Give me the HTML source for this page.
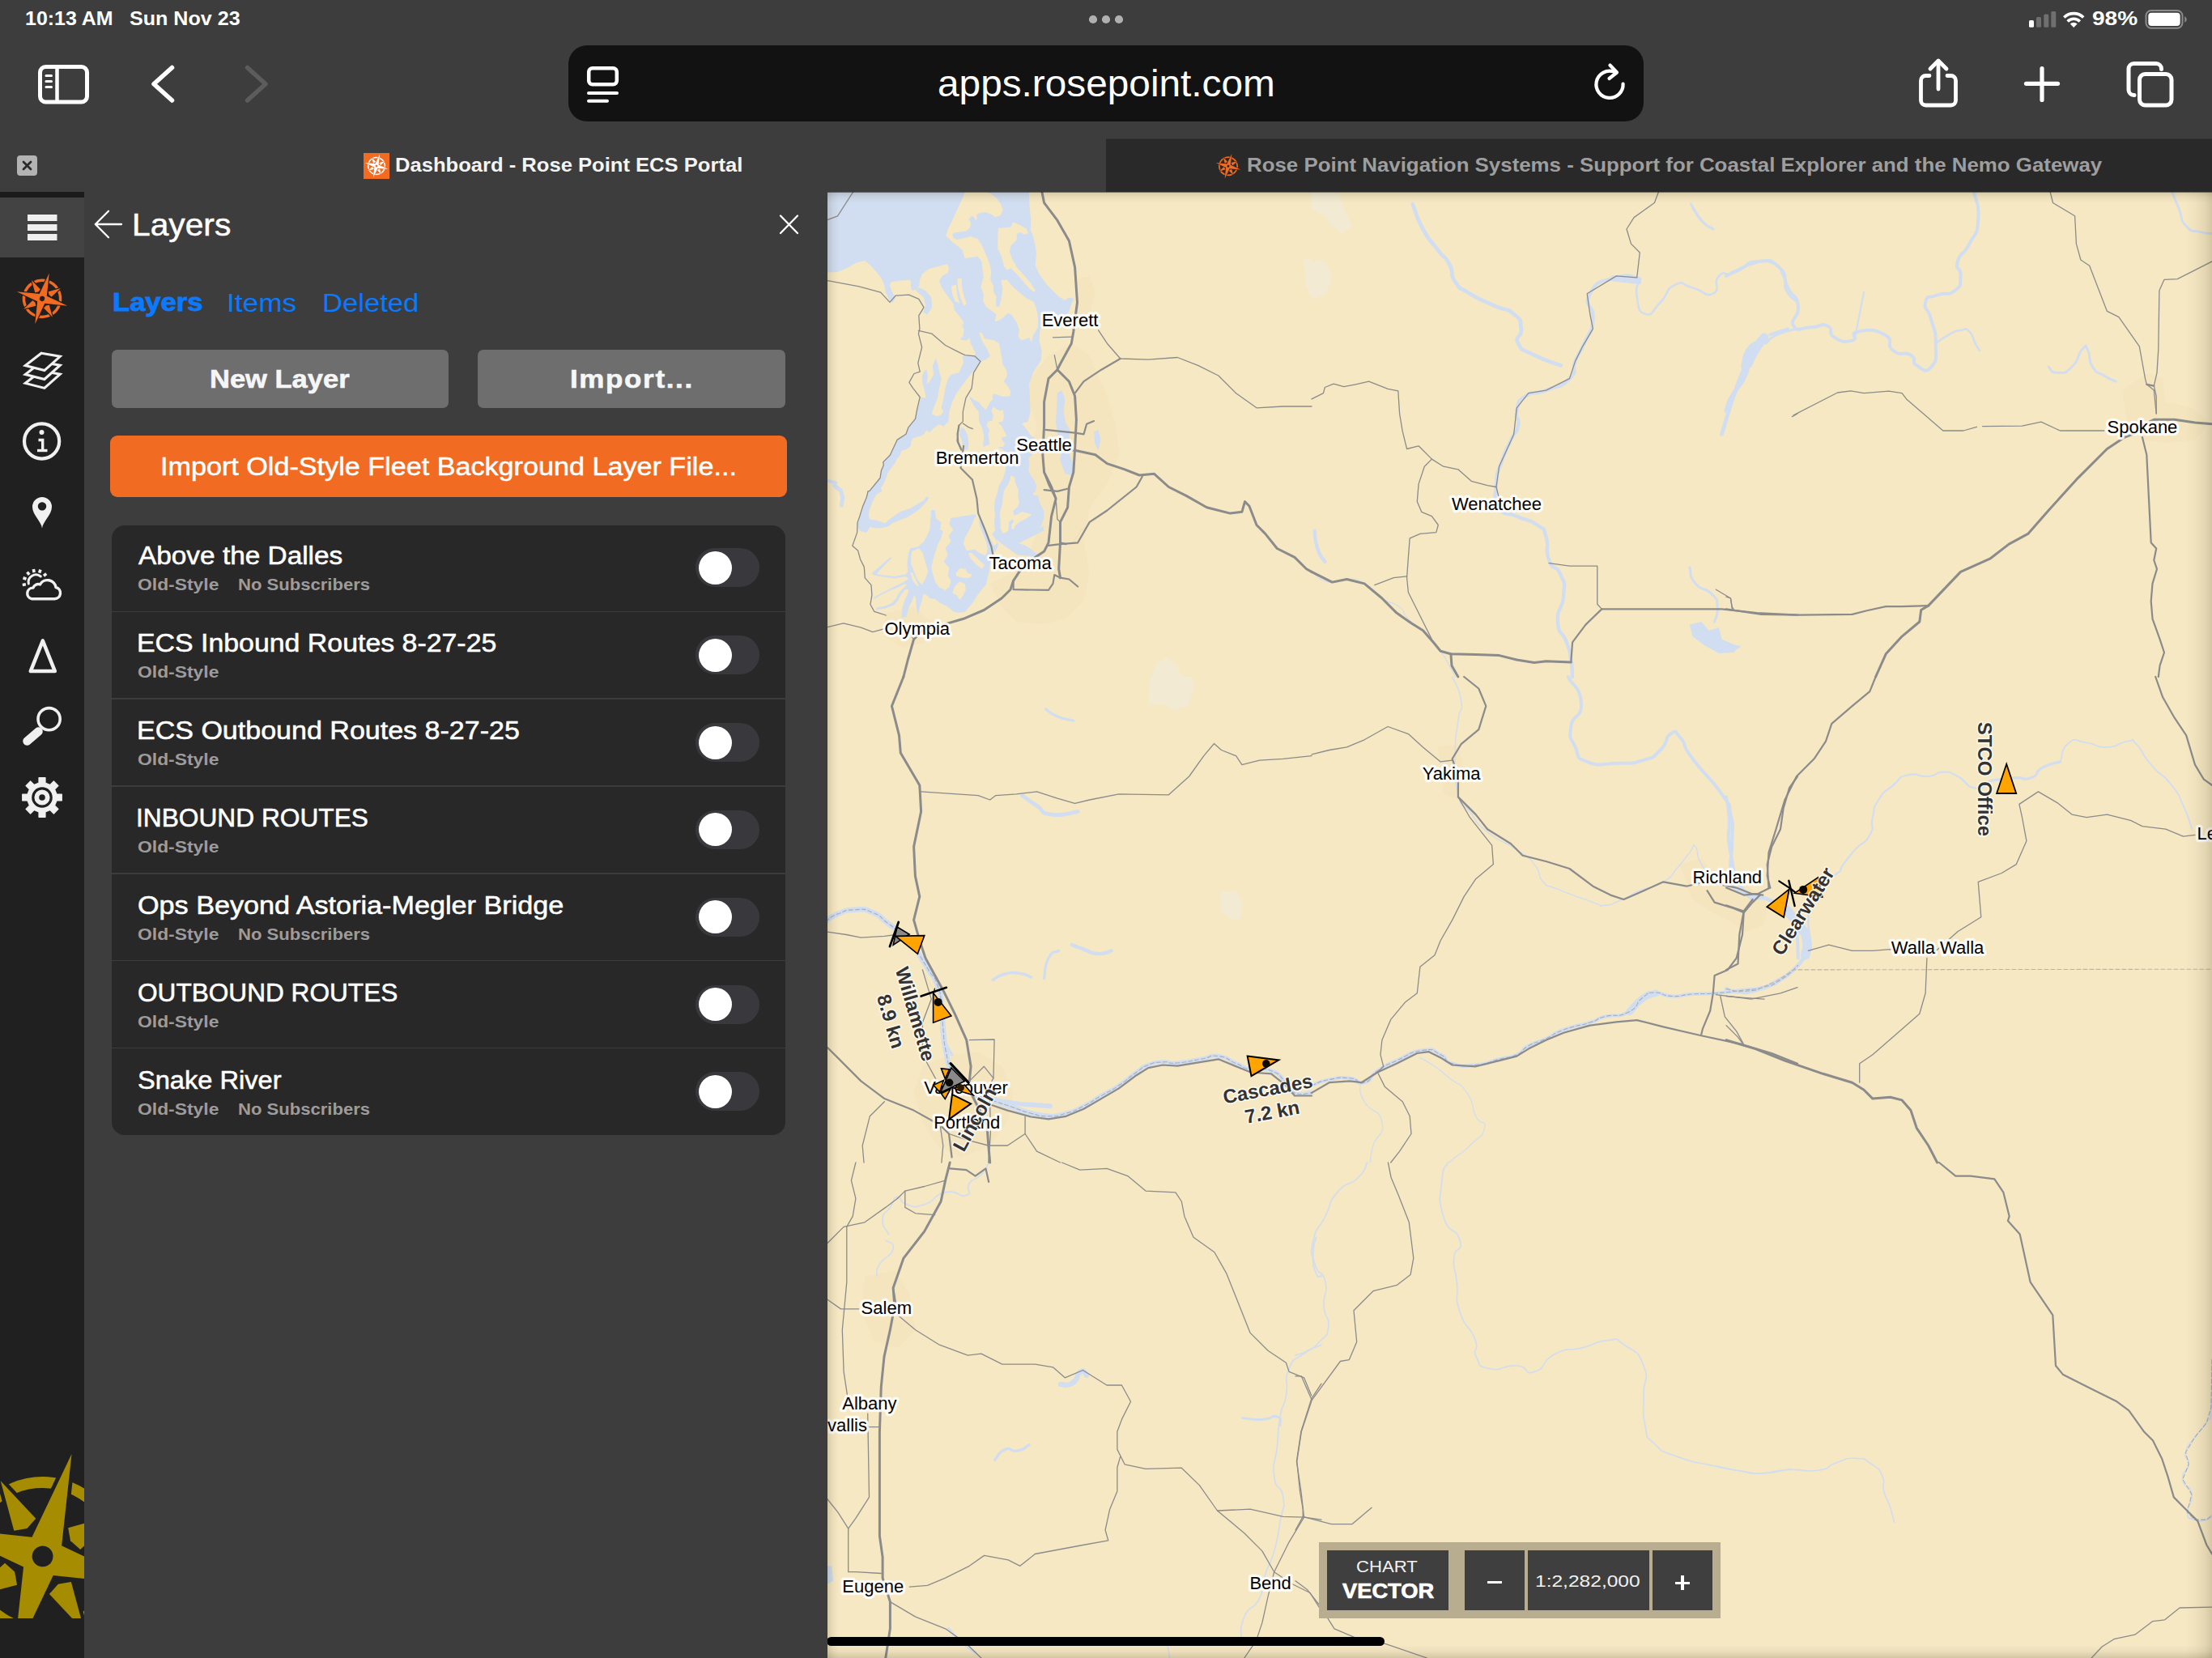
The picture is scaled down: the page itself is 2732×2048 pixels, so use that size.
<!DOCTYPE html>
<html lang="en">
<head>
<meta charset="utf-8">
<title>Dashboard - Rose Point ECS Portal</title>
<style>
*{box-sizing:border-box;margin:0;padding:0}
html,body{width:2732px;height:2048px;overflow:hidden;background:#3d3d3d}
body{position:relative;font-family:"Liberation Sans",sans-serif;color:#fff}
.abs{position:absolute}
.t{position:absolute;white-space:nowrap;line-height:1;transform-origin:0 0}
svg{position:absolute;overflow:visible}
#toolbar{left:0;top:0;width:2732px;height:171px;background:#3d3d3d}
#urlbox{left:702px;top:56px;width:1328px;height:94px;border-radius:23px;background:#121212}
#tab2{left:1366px;top:171px;width:1366px;height:66px;background:#292929;border-top:1px solid #333}
#sidebar{left:0;top:237px;width:104px;height:1811px;background:#202020;overflow:hidden}
#sbtop{left:0;top:0;width:104px;height:7px;background:#1b1b1b}
#hamb{left:0;top:7px;width:104px;height:74px;background:#434343}
#panel{left:104px;top:237px;width:918px;height:1811px;background:#3d3d3d}
#map{left:1022px;top:237px;width:1710px;height:1811px;background:#f6e8c3;overflow:hidden}
.btn{position:absolute;border-radius:7px;background:#6e6e6e}
#list{left:138px;top:648.5px;width:832px;height:753.5px;border-radius:16px;background:#282828;overflow:hidden}
.dv{position:absolute;left:138px;width:832px;height:1.5px;background:#3c3c3c}
.tg{position:absolute;left:859px;width:79px;height:48px;border-radius:24px;background:#39393d}
.tg i{position:absolute;left:3.5px;top:3.5px;width:41px;height:41px;border-radius:50%;background:#fff}
.mb{position:absolute;background:#3f3f3f}
</style>
</head>
<body>
<div class="abs" id="toolbar"></div>
<div class="abs" id="urlbox"></div>
<div class="abs" id="tab2"></div>
<div class="t" style="left:31.00px;top:11.74px;font-size:23.46px;color:#fff;font-weight:bold;transform:scaleX(1.0642);">10:13 AM</div>
<div class="t" style="left:160.25px;top:11.74px;font-size:23.46px;color:#fff;font-weight:bold;transform:scaleX(1.0694);">Sun Nov 23</div>
<div class="t" style="left:2583.52px;top:12.17px;font-size:23.18px;color:#fff;font-weight:bold;transform:scaleX(1.2117);">98%</div>
<div class="t" style="left:1158.09px;top:79.21px;font-size:47.00px;color:#fff;transform:scaleX(1.0163);">apps.rosepoint.com</div>
<div class="t" style="left:488.34px;top:191.81px;font-size:24.44px;color:#f4f4f4;font-weight:bold;transform:scaleX(1.0468);">Dashboard - Rose Point ECS Portal</div>
<div class="t" style="left:1540.32px;top:192.31px;font-size:24.44px;color:#9e9e9e;font-weight:bold;transform:scaleX(1.0582);">Rose Point Navigation Systems - Support for Coastal Explorer and the Nemo Gateway</div>
<svg style="left:0;top:0" width="2732" height="237" viewBox="0 0 2732 237" fill="none" stroke="#fff" stroke-linecap="round" stroke-linejoin="round"><circle cx="1350" cy="24" r="5.1" fill="#b0b0b0" stroke="none"/><circle cx="1366" cy="24" r="5.1" fill="#b0b0b0" stroke="none"/><circle cx="1382" cy="24" r="5.1" fill="#b0b0b0" stroke="none"/><rect x="49.5" y="82.5" width="58" height="43.5" rx="7" stroke-width="5"/><line x1="70.5" y1="83" x2="70.5" y2="126" stroke-width="4.5" stroke-linecap="butt"/><line x1="57" y1="93.5" x2="63.5" y2="93.5" stroke-width="3"/><line x1="57" y1="100.5" x2="63.5" y2="100.5" stroke-width="3"/><line x1="57" y1="107.5" x2="63.5" y2="107.5" stroke-width="3"/><polyline points="212.5,83.5 190,103.8 212.5,124" stroke-width="5.5"/><polyline points="305.5,83.5 328,103.8 305.5,124" stroke-width="5.5" stroke="#5c5c5c"/><rect x="727.2" y="84.2" width="34.6" height="20" rx="4.5" stroke-width="4.5"/><line x1="727" y1="115" x2="762" y2="115" stroke-width="4"/><line x1="727" y1="124.8" x2="750" y2="124.8" stroke-width="4"/><path d="M2004.6,103.5 A16.6,16.6 0 1 1 1993.5,88.6" stroke-width="4.2"/><polyline points="1988.5,80.5 1997,89.5 1987.5,97" stroke-width="4.2"/><path d="M2383,93.5 H2378.5 a6,6 0 0 0 -6,6 V124 a6,6 0 0 0 6,6 H2409.5 a6,6 0 0 0 6,-6 V99.5 a6,6 0 0 0 -6,-6 H2405" stroke-width="4.8"/><line x1="2394" y1="75.5" x2="2394" y2="110" stroke-width="4.8"/><polyline points="2384,85 2394,75 2404,85" stroke-width="4.8"/><line x1="2502.5" y1="103.3" x2="2541.5" y2="103.3" stroke-width="5.2"/><line x1="2522" y1="84.5" x2="2522" y2="123.5" stroke-width="5.2"/><rect x="2642.5" y="91.5" width="39.5" height="38.5" rx="7" stroke-width="5"/><path d="M2636,117.5 h-0.5 a6.5,6.5 0 0 1 -6.5,-6.5 V85 a6.5,6.5 0 0 1 6.5,-6.5 H2663 a6.5,6.5 0 0 1 6.5,6.5 v0.5" stroke-width="5"/><rect x="2506" y="25" width="6" height="8.799999999999997" rx="1.6" fill="#fff" stroke="none"/><rect x="2515" y="21" width="6" height="12.799999999999997" rx="1.6" fill="#6f6f6f" stroke="none"/><rect x="2524.3" y="17.5" width="6" height="16.299999999999997" rx="1.6" fill="#6f6f6f" stroke="none"/><rect x="2533.3" y="14" width="6" height="19.799999999999997" rx="1.6" fill="#6f6f6f" stroke="none"/><path d="M2549.3,21.5 A17,17 0 0 1 2573.2,21.5" stroke-width="3.6" stroke-linecap="butt"/><path d="M2553.7,26.4 A10.6,10.6 0 0 1 2568.8,26.4" stroke-width="3.6" stroke-linecap="butt"/><path d="M2561.2,34 L2556.8,29.6 A6.2,6.2 0 0 1 2565.6,29.6 Z" fill="#fff" stroke="none"/><rect x="2650.5" y="13" width="45" height="21.8" rx="6.5" stroke="#8c8c8c" stroke-width="2"/><rect x="2653.3" y="15.8" width="39.4" height="16.2" rx="4" fill="#fff" stroke="none"/><path d="M2698.3,20 a4.5,4.5 0 0 1 0,8 Z" fill="#8c8c8c" stroke="none"/><rect x="21" y="192" width="25" height="25" rx="4" fill="#b3b3b3" stroke="none"/><path d="M29,200 l9,9 M38,200 l-9,9" stroke="#2a2a2a" stroke-width="2.8"/><rect x="449" y="189" width="32" height="32" fill="#f26b21" stroke="none"/><g stroke="none"><g transform="translate(465,205) rotate(15.6)"><circle r="10.42" fill="none" stroke="#fff" stroke-width="1.57"/><polygon points="0.00,-15.00 2.17,-2.17 15.00,-0.00 2.17,2.17 0.00,15.00 -2.17,2.17 -15.00,0.00 -2.17,-2.17" fill="#f26b21" stroke="#f26b21" stroke-width="1.00" stroke-linejoin="miter"/><polygon points="8.59,-8.59 2.37,-4.85 3.18,-3.18 4.85,-2.37" fill="#f26b21" stroke="#f26b21" stroke-width="1.00" stroke-linejoin="miter"/><polygon points="8.59,8.59 4.85,2.37 3.18,3.18 2.37,4.85" fill="#f26b21" stroke="#f26b21" stroke-width="1.00" stroke-linejoin="miter"/><polygon points="-8.59,8.59 -2.37,4.85 -3.18,3.18 -4.85,2.37" fill="#f26b21" stroke="#f26b21" stroke-width="1.00" stroke-linejoin="miter"/><polygon points="-8.59,-8.59 -4.85,-2.37 -3.18,-3.18 -2.37,-4.85" fill="#f26b21" stroke="#f26b21" stroke-width="1.00" stroke-linejoin="miter"/><polygon points="0.00,-15.00 2.17,-2.17 15.00,-0.00 2.17,2.17 0.00,15.00 -2.17,2.17 -15.00,0.00 -2.17,-2.17" fill="#fff"/><polygon points="8.59,-8.59 2.37,-4.85 3.18,-3.18 4.85,-2.37" fill="#fff"/><polygon points="8.59,8.59 4.85,2.37 3.18,3.18 2.37,4.85" fill="#fff"/><polygon points="-8.59,8.59 -2.37,4.85 -3.18,3.18 -4.85,2.37" fill="#fff"/><polygon points="-8.59,-8.59 -4.85,-2.37 -3.18,-3.18 -2.37,-4.85" fill="#fff"/><circle r="1.40" fill="#f26b21"/></g></g><g stroke="none"><g transform="translate(1517,205.3) rotate(15.6)"><circle r="11.12" fill="none" stroke="#f26b21" stroke-width="1.68"/><polygon points="0.00,-16.00 2.32,-2.32 16.00,-0.00 2.32,2.32 0.00,16.00 -2.32,2.32 -16.00,0.00 -2.32,-2.32" fill="#292929" stroke="#292929" stroke-width="1.10" stroke-linejoin="miter"/><polygon points="9.16,-9.16 2.53,-5.18 3.39,-3.39 5.18,-2.53" fill="#292929" stroke="#292929" stroke-width="1.10" stroke-linejoin="miter"/><polygon points="9.16,9.16 5.18,2.53 3.39,3.39 2.53,5.18" fill="#292929" stroke="#292929" stroke-width="1.10" stroke-linejoin="miter"/><polygon points="-9.16,9.16 -2.53,5.18 -3.39,3.39 -5.18,2.53" fill="#292929" stroke="#292929" stroke-width="1.10" stroke-linejoin="miter"/><polygon points="-9.16,-9.16 -5.18,-2.53 -3.39,-3.39 -2.53,-5.18" fill="#292929" stroke="#292929" stroke-width="1.10" stroke-linejoin="miter"/><polygon points="0.00,-16.00 2.32,-2.32 16.00,-0.00 2.32,2.32 0.00,16.00 -2.32,2.32 -16.00,0.00 -2.32,-2.32" fill="#f26b21"/><polygon points="9.16,-9.16 2.53,-5.18 3.39,-3.39 5.18,-2.53" fill="#f26b21"/><polygon points="9.16,9.16 5.18,2.53 3.39,3.39 2.53,5.18" fill="#f26b21"/><polygon points="-9.16,9.16 -2.53,5.18 -3.39,3.39 -5.18,2.53" fill="#f26b21"/><polygon points="-9.16,-9.16 -5.18,-2.53 -3.39,-3.39 -2.53,-5.18" fill="#f26b21"/><circle r="1.50" fill="#292929"/></g></g></svg>
<div class="abs" id="map">
<svg style="left:0;top:0" width="1710" height="1811" viewBox="1022 237 1710 1811">
<path d="M1273.3,467.6 L1295.0,438.7 L1324.0,424.2 L1345.7,438.7 L1367.4,489.3 L1378.3,525.5 L1381.9,561.7 L1367.4,597.9 L1345.7,626.8 L1338.5,670.3 L1345.7,706.4 L1338.5,742.6 L1316.7,764.3 L1287.8,771.6 L1255.2,768.0 L1237.1,749.9 L1222.7,720.9 L1251.6,706.4 L1273.3,677.5 L1287.8,634.1 L1273.3,597.9 L1269.7,561.7 L1280.6,525.5 L1269.7,496.6Z" fill="#f4e5bf" />
<path d="M1331.2,344.6 L1345.7,340.9 L1352.9,359.0 L1345.7,388.0 L1338.5,409.7 L1327.6,395.2Z" fill="#f4e5bf" />
<path d="M1092.4,757.1 L1128.6,749.9 L1150.3,768.0 L1143.0,793.3 L1114.1,800.5 L1092.4,786.1Z" fill="#f4e5bf" />
<path d="M1139.4,1317.3 L1172.0,1302.8 L1208.2,1299.2 L1237.1,1317.3 L1251.6,1349.9 L1244.4,1386.1 L1222.7,1415.0 L1186.5,1429.5 L1157.5,1415.0 L1139.4,1386.1 L1128.6,1349.9Z" fill="#f4e5bf" />
<path d="M2620.5,482.1 L2653.1,460.4 L2671.2,467.6 L2674.8,496.6 L2707.4,503.8 L2729.1,521.9 L2711.0,543.6 L2674.8,547.2 L2645.9,543.6 L2627.8,521.9Z" fill="#f4e5bf" />
<path d="M2074.2,1067.6 L2101.3,1060.4 L2126.6,1089.3 L2162.8,1096.6 L2184.5,1118.3 L2177.3,1143.6 L2155.6,1150.8 L2133.9,1136.4 L2112.2,1125.5 L2090.4,1111.0Z" fill="#f4e5bf" />
<path d="M1068.0,1576.3 L1104.9,1568.9 L1123.4,1598.4 L1130.7,1642.7 L1108.6,1664.9 L1079.1,1657.5 L1064.3,1620.6Z" fill="#f4e5bf" />
<path d="M1775.6,922.9 L1800.9,919.2 L1808.2,951.8 L1800.9,988.0 L1782.8,980.8Z" fill="#f4e5bf" />
<path d="M1020.0,235.0 L1270.9,235.0 L1271.5,254.1 L1273.3,272.2 L1272.7,284.3 L1276.3,292.7 L1278.7,303.6 L1279.9,313.2 L1278.7,327.7 L1283.5,338.5 L1292.0,350.6 L1300.4,359.0 L1307.7,366.3 L1314.9,371.1 L1320.9,367.5 L1326.4,368.7 L1323.4,374.7 L1320.9,383.2 L1315.3,393.9 L1307.1,398.0 L1284.6,406.2 L1283.5,420.6 L1286.6,432.9 L1285.6,445.2 L1276.4,459.5 L1271.2,473.9 L1271.8,492.4 L1272.7,508.8 L1269.2,521.1 L1262.0,523.1 L1267.6,529.7 L1273.3,538.3 L1278.2,540.7 L1279.1,551.8 L1275.3,561.5 L1270.4,565.4 L1271.4,574.0 L1270.4,581.8 L1273.3,587.6 L1277.2,593.3 L1280.1,600.1 L1279.1,605.9 L1275.3,610.7 L1282.0,612.6 L1284.0,620.4 L1286.9,626.2 L1289.7,631.9 L1289.3,639.7 L1286.9,647.4 L1282.0,655.1 L1273.3,661.9 L1265.6,665.7 L1257.9,670.5 L1288.3,649.7 L1289.3,655.4 L1275.8,662.2 L1266.2,667.0 L1258.4,670.9 L1266.2,673.8 L1273.9,678.6 L1279.7,683.4 L1285.5,687.3 L1277.7,687.3 L1256.5,685.4 L1246.9,678.6 L1237.2,671.8 L1230.4,666.1 L1233.3,672.8 L1229.5,680.5 L1226.6,682.5 L1214.0,694.0 L1217.9,686.3 L1219.8,678.6 L1217.9,669.0 L1214.0,659.3 L1210.2,649.7 L1208.3,640.0 L1228.0,674.4 L1231.8,670.5 L1229.0,664.8 L1225.1,659.9 L1229.0,655.1 L1228.0,645.5 L1229.0,635.8 L1228.0,626.2 L1229.0,616.5 L1231.8,608.8 L1233.8,600.1 L1238.6,591.4 L1241.5,582.7 L1242.5,574.0 L1231.8,574.0 L1219.3,577.9 L1211.6,572.1 L1214.0,553.2 L1215.2,538.7 L1212.8,527.9 L1209.2,520.6 L1208.6,508.6 L1203.7,502.5 L1200.1,496.5 L1197.7,491.7 L1198.9,489.9 L1202.5,494.1 L1208.6,496.5 L1213.4,502.5 L1217.6,506.2 L1223.0,496.5 L1226.7,492.9 L1225.5,489.3 L1227.9,486.2 L1238.7,489.9 L1247.2,489.3 L1248.4,483.2 L1244.8,477.2 L1239.9,471.2 L1243.5,465.1 L1243.5,457.9 L1238.7,450.7 L1236.3,436.2 L1233.9,424.1 L1227.9,420.5 L1215.8,418.1 L1213.4,412.1 L1211.0,410.3 L1209.2,411.5 L1213.4,421.7 L1219.4,431.4 L1223.0,439.8 L1217.0,444.6 L1211.6,446.4 L1210.4,446.4 L1203.7,439.8 L1204.9,436.2 L1202.5,431.4 L1198.9,424.1 L1197.7,416.9 L1194.1,420.5 L1185.6,419.3 L1189.9,414.5 L1190.5,407.2 L1188.7,400.0 L1188.2,406.2 L1190.2,398.0 L1185.1,390.8 L1178.9,383.3 L1177.5,375.0 L1170.7,366.2 L1163.6,356.0 L1159.9,347.2 L1163.6,341.0 L1170.7,336.9 L1172.2,331.4 L1170.1,326.2 L1161.5,328.3 L1147.2,332.0 L1138.9,338.5 L1136.1,345.7 L1135.3,352.9 L1131.8,357.4 L1126.6,359.1 L1125.0,353.9 L1124.6,345.7 L1110.2,346.7 L1100.4,348.4 L1099.0,352.9 L1102.0,361.1 L1105.7,368.3 L1103.1,373.8 L1099.0,371.4 L1093.8,361.1 L1091.8,350.8 L1088.7,343.7 L1082.6,335.9 L1075.0,327.7 L1068.2,322.1 L1057.9,324.6 L1046.7,330.7 L1034.4,336.1 L1020.0,336.5Z" fill="#d1ddf0" />
<path d="M1205.0,635.7 L1205.5,637.6 L1203.4,640.0 L1200.5,647.7 L1196.7,655.4 L1191.8,664.1 L1189.9,671.8 L1193.8,680.5 L1203.4,678.6 L1210.2,683.4 L1217.9,686.3 L1219.8,678.6 L1226.6,682.5 L1222.7,697.9 L1221.8,705.6 L1219.8,713.3 L1217.9,722.0 L1212.1,728.8 L1206.3,736.5 L1201.5,744.2 L1196.7,750.0 L1191.8,755.8 L1184.1,756.8 L1178.3,755.8 L1169.7,749.0 L1160.0,744.2 L1155.1,739.9 L1148.3,739.0 L1144.5,735.1 L1140.6,733.2 L1138.7,740.9 L1135.8,750.5 L1133.9,760.0 L1131.9,750.5 L1131.0,739.0 L1129.0,735.1 L1126.2,742.8 L1122.3,750.5 L1119.4,762.1 L1113.6,763.1 L1114.6,750.5 L1117.5,740.9 L1121.3,733.2 L1122.3,727.4 L1117.5,728.3 L1112.6,735.1 L1108.8,741.9 L1104.0,747.6 L1093.3,751.5 L1081.8,753.4 L1082.7,750.5 L1093.3,748.6 L1102.0,744.8 L1106.9,739.0 L1109.7,733.2 L1114.6,727.4 L1120.4,722.6 L1116.5,721.6 L1106.9,726.4 L1097.2,730.3 L1087.6,735.1 L1079.8,739.9 L1078.9,738.0 L1087.6,733.2 L1097.2,728.3 L1106.9,723.5 L1116.5,718.7 L1122.3,714.8 L1118.4,711.9 L1112.6,712.9 L1104.9,714.4 L1097.2,713.4 L1086.6,711.9 L1077.9,710.0 L1076.9,708.1 L1085.6,700.4 L1093.3,693.6 L1100.1,688.3 L1101.1,689.7 L1095.3,695.5 L1090.4,700.4 L1086.6,704.2 L1082.7,709.0 L1087.6,710.0 L1097.2,711.0 L1104.9,711.9 L1112.6,710.5 L1118.4,709.5 L1121.3,706.2 L1120.4,696.5 L1121.3,686.9 L1124.2,677.2 L1133.9,675.3 L1140.6,669.5 L1144.5,662.7 L1148.3,654.0 L1149.3,641.5 L1150.3,629.9 L1154.6,629.9 L1156.1,640.5 L1162.8,645.4 L1160.9,654.0 L1164.8,656.0 L1161.9,665.6 L1158.0,673.3 L1155.1,682.0 L1152.2,691.7 L1150.3,701.3 L1152.2,709.0 L1155.1,718.7 L1159.9,725.5 L1166.7,728.3 L1165.8,730.7 L1172.5,724.9 L1174.5,717.2 L1170.6,710.4 L1172.5,701.8 L1165.8,694.0 L1170.6,685.4 L1167.7,676.7 L1174.5,669.0 L1171.6,662.2 L1177.4,654.5 L1172.5,647.7 L1174.5,640.0 L1189.0,637.6 L1202.5,635.7Z" fill="#d1ddf0" />
<path d="M1126.2,681.1 L1134.8,677.2 L1139.7,683.0 L1143.5,696.5 L1146.4,706.2 L1142.6,715.8 L1138.7,722.6 L1132.9,715.8 L1129.0,706.2 L1125.2,696.5 L1125.2,686.9Z" fill="#f6e8c3" />
<path d="M1124.2,707.1 L1127.1,707.1 L1131.0,715.8 L1134.8,723.5 L1131.9,723.5 L1127.1,716.8Z" fill="#f6e8c3" />
<path d="M1193.1,234.8 L1212.4,234.8 L1224.4,239.6 L1231.7,245.7 L1236.5,252.9 L1238.9,260.1 L1235.3,266.2 L1229.3,268.0 L1224.4,265.0 L1217.2,261.9 L1210.0,263.1 L1205.7,265.6 L1206.9,269.8 L1205.1,272.2 L1202.7,267.6 L1199.3,267.6 L1196.7,271.0 L1199.1,275.8 L1197.9,281.8 L1193.1,285.5 L1179.8,287.3 L1176.2,289.1 L1177.4,293.3 L1181.0,296.3 L1190.7,293.9 L1199.1,292.1 L1207.6,295.1 L1212.4,302.3 L1217.2,313.2 L1222.0,325.3 L1224.4,336.1 L1223.2,344.6 L1226.9,353.0 L1226.9,360.2 L1230.5,366.3 L1229.9,378.3 L1234.1,378.9 L1236.5,368.7 L1238.3,356.6 L1236.5,348.2 L1237.7,345.8 L1243.7,345.8 L1252.2,355.4 L1259.4,361.5 L1267.9,368.7 L1276.3,372.3 L1279.9,380.8 L1282.3,392.8 L1281.7,404.9 L1276.3,413.3 L1273.9,423.6 L1271.5,416.9 L1261.8,420.6 L1257.6,415.7 L1258.8,407.3 L1255.8,398.8 L1249.8,389.2 L1244.9,386.8 L1235.3,395.2 L1228.7,397.6 L1230.5,388.0 L1226.9,385.6 L1218.4,379.5 L1214.2,372.3 L1214.8,362.7 L1211.2,354.2 L1214.8,342.2 L1213.6,332.5 L1212.4,322.9 L1207.6,316.8 L1191.9,319.2 L1188.3,308.4 L1176.2,298.7 L1168.3,291.5 L1171.4,281.8 L1176.2,272.2 L1182.2,258.9 L1188.3,245.7Z" fill="#f6e8c3" />
<path d="M1232.9,281.8 L1248.6,280.6 L1251.0,274.6 L1260.6,278.2 L1267.9,283.0 L1269.7,287.9 L1265.5,289.7 L1259.4,286.7 L1255.8,289.1 L1255.8,296.3 L1248.6,303.6 L1246.8,310.8 L1249.8,319.2 L1255.8,330.1 L1265.5,340.9 L1273.9,350.6 L1278.7,359.0 L1276.9,360.8 L1271.5,356.6 L1263.0,347.0 L1255.8,338.5 L1248.6,331.3 L1243.7,333.7 L1240.1,328.9 L1236.5,315.6 L1232.3,307.2 L1232.3,293.9Z" fill="#f6e8c3" />
<path d="M1175.0,353.0 L1181.0,351.8 L1182.2,363.9 L1185.2,374.7 L1179.8,372.3 L1176.2,363.9Z" fill="#f6e8c3" />
<path d="M1182.2,344.6 L1187.6,343.4 L1188.3,356.6 L1190.7,366.3 L1193.7,374.7 L1190.7,378.3 L1186.4,368.7 L1183.4,356.6Z" fill="#f6e8c3" />
<path d="M1226.7,502.5 L1230.3,504.9 L1235.1,507.4 L1238.7,506.2 L1239.9,514.6 L1238.7,520.6 L1232.7,521.8 L1237.5,526.7 L1241.1,533.9 L1243.5,538.7 L1236.3,541.1 L1241.1,548.4 L1238.7,552.0 L1230.3,552.0 L1223.0,553.2 L1221.8,546.0 L1220.6,536.3 L1221.8,530.3 L1218.2,525.5 L1220.6,520.6 L1225.5,519.4 L1226.7,512.2 L1224.2,507.4Z" fill="#f6e8c3" />
<path d="M1200.0,551.8 L1211.6,552.8 L1222.2,549.0 L1231.8,551.8 L1240.5,556.7 L1243.4,565.4 L1241.5,574.0 L1219.3,577.9 L1200.0,574.0Z" fill="#f6e8c3" />
<path d="M1248.3,587.6 L1253.1,589.5 L1254.0,597.2 L1257.9,604.9 L1257.4,612.6 L1258.9,620.4 L1256.9,626.2 L1251.1,631.0 L1252.6,636.8 L1257.9,634.8 L1261.8,631.9 L1269.5,633.9 L1274.3,635.8 L1267.6,640.6 L1259.8,644.5 L1254.0,649.3 L1252.1,654.1 L1249.2,653.2 L1249.2,648.3 L1252.1,643.5 L1250.2,641.6 L1246.3,644.5 L1245.4,655.1 L1242.5,658.0 L1238.6,659.0 L1235.7,653.2 L1235.7,643.5 L1234.7,632.9 L1237.6,624.2 L1238.6,616.5 L1239.6,606.9 L1244.4,599.1 L1247.3,593.3Z" fill="#f6e8c3" />
<path d="M1195.7,683.4 L1199.6,682.5 L1216.0,697.9 L1213.1,702.7 L1206.3,697.9 L1198.6,689.2Z" fill="#f6e8c3" />
<path d="M1180.3,707.6 L1186.1,701.8 L1192.8,702.7 L1194.7,707.6 L1200.5,709.5 L1198.6,713.3 L1191.8,714.3 L1186.1,713.3 L1181.2,711.4Z" fill="#f6e8c3" />
<path d="M1179.3,724.0 L1185.1,718.2 L1191.8,721.1 L1192.8,728.8 L1189.0,736.5 L1185.1,741.3 L1182.2,735.5 L1176.4,732.6Z" fill="#f6e8c3" />
<path d="M1186.9,527.9 L1191.7,530.3 L1195.3,538.7 L1196.5,548.4 L1195.3,555.6 L1189.3,555.6 L1188.1,544.8 L1184.4,536.3Z" fill="#d1ddf0" />
<path d="M1155.5,441.0 L1188.7,439.8 L1203.7,439.8 L1210.4,446.4 L1202.5,457.9 L1196.5,465.1 L1189.3,474.8 L1182.0,484.4 L1176.0,496.5 L1172.4,508.6 L1171.2,520.6 L1165.1,526.7 L1160.0,523.9 L1152.9,528.9 L1148.6,534.0 L1144.2,531.8 L1139.9,537.6 L1127.6,541.3 L1125.4,544.9 L1124.7,550.7 L1119.6,555.0 L1113.1,557.2 L1111.7,562.2 L1107.3,567.3 L1105.1,572.4 L1100.1,578.9 L1096.5,584.0 L1094.3,590.5 L1092.1,596.3 L1087.0,604.2 L1087.6,602.9 L1089.5,606.8 L1082.7,610.6 L1077.9,619.3 L1074.0,629.0 L1072.6,635.7 L1074.0,641.5 L1081.8,642.5 L1089.5,644.9 L1093.3,646.3 L1097.2,642.5 L1104.9,636.7 L1112.6,631.8 L1124.2,628.0 L1133.9,622.2 L1140.6,618.3 L1144.5,613.5 L1147.4,614.5 L1144.5,619.3 L1137.7,627.0 L1129.0,633.8 L1121.3,638.6 L1111.7,642.5 L1102.0,646.3 L1097.2,650.2 L1089.5,652.1 L1081.8,652.6 L1074.0,651.1 L1072.6,654.0 L1070.2,657.9 L1062.5,656.0 L1060.5,654.0 L1059.1,645.4 L1061.5,638.6 L1065.4,626.1 L1070.2,614.5 L1072.1,606.8 L1074.0,606.4 L1087.0,590.5 L1088.5,581.1 L1091.4,574.5 L1090.7,570.9 L1099.3,562.2 L1103.7,552.8 L1108.0,543.4 L1118.9,536.2 L1121.8,528.2 L1130.5,517.4 L1131.9,507.2 L1134.1,502.9 L1135.0,500.1 L1137.4,490.5 L1143.4,491.7 L1142.2,483.2 L1139.8,474.8 L1138.6,465.1 L1141.6,457.9 L1144.6,456.7 L1145.8,465.1 L1144.6,474.8 L1148.3,471.2 L1153.1,462.7 L1151.9,451.9 L1155.5,442.8Z" fill="#d1ddf0" />
<path d="M1155.5,436.2 L1188.7,436.2 L1188.7,439.8 L1189.9,448.3 L1184.4,460.3 L1174.8,462.7 L1171.2,467.6 L1167.6,478.4 L1165.7,490.5 L1162.7,503.7 L1165.1,508.6 L1162.7,512.2 L1156.7,514.6 L1150.7,511.0 L1153.1,503.7 L1157.9,491.7 L1160.3,478.4 L1162.7,467.6 L1160.3,460.3 L1157.9,448.3 L1155.5,442.8Z" fill="#f6e8c3" />
<path d="M1030.6,600.0 L1038.3,605.8 L1040.7,614.5 L1039.3,624.1" fill="none" stroke="#d1ddf0" stroke-width="5" stroke-linejoin="round" stroke-linecap="round" />
<path d="M1022.1,593.8 L1032.3,596.5" fill="none" stroke="#d1ddf0" stroke-width="4" stroke-linejoin="round" stroke-linecap="round" />
<path d="M1134.8,354.9 L1143.1,359.1 L1150.2,367.3 L1151.3,379.6 L1145.1,388.8 L1140.0,385.7 L1143.1,377.5 L1141.0,367.3 L1133.8,361.5 L1130.7,358.0Z" fill="#d1ddf0" />
<path d="M1306.1,485.2 L1311.2,482.1 L1315.3,492.4 L1313.7,508.8 L1316.3,523.1 L1321.5,531.3 L1319.8,547.7 L1321.5,564.1 L1327.6,576.4 L1325.6,588.7 L1315.3,584.6 L1309.2,568.2 L1311.2,551.8 L1307.1,539.5 L1304.0,523.1 L1305.1,502.6Z" fill="#d1ddf0" />
<path d="M1351.2,533.4 L1356.3,531.3 L1359.4,543.6 L1356.3,555.9 L1352.2,547.7Z" fill="#d1ddf0" />
<path d="M1744.8,252.3 C1749.1,262.5 1747.3,264.3 1757.5,283.0 C1767.8,301.7 1764.8,293.9 1775.6,308.4 C1786.5,322.9 1782.8,313.2 1790.1,326.5 C1797.3,339.7 1788.9,336.1 1797.3,348.2 C1805.8,360.2 1799.7,353.0 1815.4,362.7 C1831.1,372.3 1826.3,368.7 1844.4,377.1 C1862.5,385.6 1858.2,378.3 1869.7,388.0 C1881.2,397.6 1876.9,394.0 1878.7,406.1 C1880.6,418.1 1869.7,413.3 1875.1,424.2 C1880.6,435.0 1877.5,429.6 1895.0,438.7 C1912.5,447.7 1916.7,447.1 1927.6,451.3" fill="none" stroke="#d1ddf0" stroke-width="4.705030763662686" stroke-linejoin="round" stroke-linecap="round" />
<path d="M2025.3,344.6 C2015.7,344.0 2016.9,336.7 1996.4,342.8 C1975.9,348.8 1973.4,345.2 1963.8,362.7 C1954.1,380.1 1969.8,374.7 1967.4,395.2 C1965.0,415.7 1963.8,407.3 1956.6,424.2 C1949.3,441.1 1951.7,431.4 1945.7,445.9 C1939.7,460.4 1950.5,455.5 1938.5,467.6 C1926.4,479.7 1927.6,474.8 1909.5,482.1 C1891.4,489.3 1896.2,480.9 1884.2,489.3 C1872.1,497.8 1876.3,495.3 1873.3,507.4 C1870.3,519.5 1877.5,513.4 1875.1,525.5 C1872.7,537.6 1872.7,529.1 1866.1,543.6 C1859.4,558.1 1861.3,550.8 1855.2,568.9 C1849.2,587.0 1849.2,578.6 1848.0,597.9 C1846.8,617.2 1843.2,613.6 1851.6,626.8 C1860.0,640.1 1857.6,630.5 1873.3,637.7 C1889.0,644.9 1886.6,640.1 1898.6,648.5 C1910.7,657.0 1904.7,648.5 1909.5,663.0 C1914.3,677.5 1907.1,676.3 1913.1,692.0 C1919.2,707.7 1921.6,695.6 1927.6,710.1 C1933.6,724.5 1932.4,716.1 1931.2,735.4 C1930.0,754.7 1922.8,748.7 1924.0,768.0 C1925.2,787.3 1929.4,777.6 1934.8,793.3 C1940.3,809.0 1937.9,800.8 1940.3,815.0 C1942.7,829.2 1941.5,829.0 1942.1,836.0" fill="none" stroke="#d1ddf0" stroke-width="4.3431053203040175" stroke-linejoin="round" stroke-linecap="round" />
<path d="M1992.7,343.8 L2023.5,347.5" fill="none" stroke="#d1ddf0" stroke-width="7.238508867173363" stroke-linejoin="round" stroke-linecap="round" />
<path d="M2025.3,344.6 C2024.1,351.8 2019.3,351.8 2021.7,366.3 C2024.1,380.8 2022.9,385.6 2032.5,388.0 C2042.2,390.4 2038.6,385.6 2050.6,373.5 C2062.7,361.5 2055.5,357.8 2068.7,351.8 C2082.0,345.8 2074.8,351.8 2090.4,355.4 C2106.1,359.0 2104.9,367.5 2115.8,362.7 C2126.6,357.8 2114.6,349.4 2123.0,340.9 C2131.5,332.5 2127.8,342.2 2141.1,337.3 C2154.4,332.5 2147.1,330.7 2162.8,326.5 C2178.5,322.2 2174.9,319.8 2188.2,324.7 C2201.4,329.5 2196.6,329.5 2202.6,340.9 C2208.7,352.4 2200.5,348.2 2206.2,359.0 C2212.0,369.9 2215.4,368.7 2220.0,373.5" fill="none" stroke="#d1ddf0" stroke-width="2.533478103510677" stroke-linejoin="round" stroke-linecap="round" />
<path d="M2173.7,424.2 C2169.5,427.2 2167.3,423.6 2161.0,433.2 C2154.7,442.9 2156.9,446.5 2154.9,453.1" fill="none" stroke="#d1ddf0" stroke-width="9.410061527325372" stroke-linejoin="round" stroke-linecap="round" />
<path d="M2154.9,453.1 C2150.3,465.2 2150.5,461.6 2141.1,489.3 C2131.7,517.1 2131.5,520.7 2126.6,536.4" fill="none" stroke="#d1ddf0" stroke-width="4.705030763662686" stroke-linejoin="round" stroke-linecap="round" />
<path d="M2220.0,406.1 C2211.8,408.5 2208.4,407.3 2195.4,413.3 C2182.4,419.4 2185.7,420.6 2180.9,424.2" fill="none" stroke="#d1ddf0" stroke-width="2.895403546869345" stroke-linejoin="round" stroke-linecap="round" />
<path d="M2088.6,252.3 C2092.9,258.9 2092.3,261.9 2101.3,272.2 C2110.3,282.4 2111.0,279.4 2115.8,283.0" fill="none" stroke="#d1ddf0" stroke-width="3.257328990228013" stroke-linejoin="round" stroke-linecap="round" />
<path d="M2086.8,771.6 L2101.3,768.0 L2110.3,778.8 L2123.0,775.2 L2126.6,789.7 L2148.3,798.7 L2141.1,806.0 L2123.0,807.0 L2104.9,796.9 L2090.4,786.1Z" fill="#d1ddf0" />
<path d="M2086.8,701.0 C2089.2,707.7 2085.0,710.1 2094.1,720.9 C2103.1,731.8 2104.9,723.9 2114.0,733.6 C2123.0,743.2 2120.0,738.4 2121.2,749.9 C2122.4,761.3 2118.8,761.9 2117.6,768.0" fill="none" stroke="#d1ddf0" stroke-width="2.895403546869345" stroke-linejoin="round" stroke-linecap="round" />
<path d="M1623.6,655.8 C1624.8,663.0 1623.0,664.8 1627.2,677.5 C1631.5,690.2 1633.3,688.4 1636.3,693.8" fill="none" stroke="#d1ddf0" stroke-width="4.3431053203040175" stroke-linejoin="round" stroke-linecap="round" />
<path d="M1620.0,706.4 C1627.2,710.7 1627.2,716.1 1641.7,719.1 C1656.2,722.1 1649.0,714.9 1663.4,715.5 C1677.9,716.1 1670.7,713.1 1685.1,720.9 C1699.6,728.8 1692.4,729.4 1706.9,739.0 C1721.3,748.7 1717.7,741.4 1728.6,749.9 C1739.4,758.3 1727.4,752.3 1739.4,764.3 C1751.5,776.4 1751.5,772.8 1764.8,786.1 C1778.0,799.3 1770.8,792.1 1779.2,804.2 C1787.7,816.2 1784.1,811.6 1790.1,822.2 C1796.1,832.9 1794.9,831.4 1797.3,836.0" fill="none" stroke="#d1ddf0" stroke-width="1.2" stroke-linejoin="round" stroke-linecap="round" />
<path d="M2132.0,340.9 C2138.0,337.9 2136.8,337.9 2150.1,331.9 C2163.4,325.9 2156.1,323.5 2171.8,322.9 C2187.5,322.2 2185.1,319.2 2197.1,330.1 C2209.2,340.9 2200.2,339.7 2208.0,355.4 C2215.8,371.1 2218.2,361.5 2220.7,377.1 C2223.1,392.8 2209.8,393.4 2215.2,402.5 C2220.7,411.5 2223.1,404.3 2236.9,404.3 C2250.8,404.3 2247.2,398.2 2256.8,402.5 C2266.5,406.7 2255.6,410.9 2265.9,416.9 C2276.1,423.0 2278.0,423.0 2287.6,420.6 C2297.3,418.1 2281.6,412.1 2294.8,409.7 C2308.1,407.3 2312.9,405.5 2327.4,413.3 C2341.9,421.2 2327.4,424.8 2338.3,433.2 C2349.1,441.7 2350.3,432.6 2360.0,438.7 C2369.6,444.7 2358.8,446.5 2367.2,451.3 C2375.7,456.1 2377.5,462.2 2385.3,453.1 C2393.2,444.1 2390.7,443.5 2390.7,424.2 C2390.7,404.9 2389.5,412.1 2385.3,395.2 C2381.1,378.3 2375.7,383.8 2378.1,373.5 C2380.5,363.3 2380.5,369.3 2392.6,364.5 C2404.6,359.6 2404.6,366.9 2414.3,359.0 C2423.9,351.2 2420.3,353.0 2421.5,340.9 C2422.7,328.9 2414.3,336.1 2417.9,322.9 C2421.5,309.6 2423.9,318.0 2432.4,301.1 C2440.8,284.3 2441.4,293.9 2443.2,272.2 C2445.0,250.5 2439.6,248.1 2437.8,236.0" fill="none" stroke="#d1ddf0" stroke-width="3.9811798769453492" stroke-linejoin="round" stroke-linecap="round" />
<path d="M2390.7,424.2 C2396.2,420.6 2396.8,418.8 2407.0,413.3 C2417.3,407.9 2413.1,409.1 2421.5,407.9 C2429.9,406.7 2426.3,404.3 2432.4,409.7 C2438.4,415.1 2435.4,416.3 2439.6,424.2 C2443.8,432.0 2443.2,430.2 2445.0,433.2" fill="none" stroke="#d1ddf0" stroke-width="2.533478103510677" stroke-linejoin="round" stroke-linecap="round" />
<path d="M2179.0,416.9 C2175.4,421.8 2174.8,420.6 2168.2,431.4 C2161.6,442.3 2162.2,443.5 2159.1,449.5" fill="none" stroke="#d1ddf0" stroke-width="10.857763300760045" stroke-linejoin="round" stroke-linecap="round" />
<path d="M2159.1,449.5 C2157.3,455.5 2160.3,454.3 2153.7,467.6 C2147.1,480.9 2146.5,476.0 2139.2,489.3 C2132.0,502.6 2134.4,501.4 2132.0,507.4" fill="none" stroke="#d1ddf0" stroke-width="5.066956207021354" stroke-linejoin="round" stroke-linecap="round" />
<path d="M2208.0,406.1 L2186.3,413.3" fill="none" stroke="#d1ddf0" stroke-width="3.6192544335866814" stroke-linejoin="round" stroke-linecap="round" />
<path d="M2291.2,416.9 C2293.0,407.3 2293.0,406.7 2296.7,388.0 C2300.3,369.3 2300.3,369.9 2302.1,360.8" fill="none" stroke="#d1ddf0" stroke-width="2.1715526601520088" stroke-linejoin="round" stroke-linecap="round" />
<path d="M2682.1,236.0 C2685.1,243.2 2685.1,243.2 2691.1,257.7 C2697.1,272.2 2691.1,269.8 2700.2,279.4 C2709.2,289.1 2707.6,283.6 2718.2,286.7 C2728.9,289.7 2727.4,287.9 2732.0,288.5" fill="none" stroke="#d1ddf0" stroke-width="2.895403546869345" stroke-linejoin="round" stroke-linecap="round" />
<path d="M2530.1,453.1 C2533.7,455.5 2531.3,460.4 2540.9,460.4 C2550.6,460.4 2548.8,462.8 2559.0,453.1 C2569.3,443.5 2565.1,438.1 2571.7,431.4 C2578.3,424.8 2574.7,426.0 2578.9,433.2 C2583.1,440.5 2577.7,442.9 2584.4,453.1 C2591.0,463.4 2589.2,458.0 2598.8,464.0 C2608.5,470.0 2608.5,468.8 2613.3,471.2" fill="none" stroke="#d1ddf0" stroke-width="2.895403546869345" stroke-linejoin="round" stroke-linecap="round" />
<path d="M2132.0,800.5 L2148.3,798.7" fill="none" stroke="#d1ddf0" stroke-width="2.895403546869345" stroke-linejoin="round" stroke-linecap="round" />
<path d="M1020.0,1138.2 C1024.8,1135.2 1022.4,1133.9 1034.5,1129.1 C1046.5,1124.3 1041.7,1124.3 1056.2,1123.7 C1070.7,1123.1 1064.6,1121.9 1077.9,1127.3 C1091.2,1132.7 1085.1,1132.1 1096.0,1140.0 C1106.9,1147.8 1100.8,1143.6 1110.5,1150.8 C1120.1,1158.1 1116.5,1152.0 1124.9,1161.7 C1133.4,1171.3 1128.6,1167.7 1135.8,1179.8 C1143.0,1191.9 1139.4,1185.8 1146.7,1197.9 C1153.9,1209.9 1152.1,1201.5 1157.5,1216.0 C1162.9,1230.5 1160.5,1223.2 1162.9,1241.3 C1165.4,1259.4 1162.9,1251.0 1164.8,1270.3 C1166.6,1289.6 1164.8,1281.1 1168.4,1299.2 C1172.0,1317.3 1169.6,1310.1 1175.6,1324.5 C1181.6,1339.0 1175.6,1333.0 1186.5,1342.6 C1197.3,1352.3 1193.7,1347.5 1208.2,1353.5 C1222.7,1359.5 1215.4,1355.9 1229.9,1360.7 C1244.4,1365.6 1237.1,1363.1 1251.6,1368.0 C1266.1,1372.8 1258.8,1371.6 1273.3,1375.2 C1287.8,1378.8 1287.8,1377.6 1295.0,1378.8" fill="none" stroke="#d1ddf0" stroke-width="6.514657980456026" stroke-linejoin="round" stroke-linecap="round" />
<path d="M1295.0,1378.8 C1302.3,1377.6 1302.3,1379.4 1316.7,1375.2 C1331.2,1371.0 1324.0,1373.4 1338.5,1366.2 C1352.9,1358.9 1345.7,1361.9 1360.2,1353.5 C1374.6,1345.0 1367.4,1350.5 1381.9,1340.8 C1396.4,1331.2 1391.5,1333.0 1403.6,1324.5 C1415.7,1316.1 1407.2,1319.7 1418.1,1315.5 C1428.9,1311.3 1424.1,1312.7 1436.2,1311.9 C1448.2,1311.0 1438.6,1314.2 1454.3,1313.0 C1469.9,1311.8 1466.3,1311.0 1483.2,1308.3 C1500.1,1305.5 1490.4,1302.8 1504.9,1304.6 C1519.4,1306.4 1513.4,1308.3 1526.6,1313.7 C1539.9,1319.1 1530.3,1317.9 1544.7,1320.9 C1559.2,1323.9 1555.6,1317.3 1570.1,1322.7 C1584.5,1328.2 1578.5,1328.2 1588.2,1337.2 C1597.8,1346.3 1588.4,1345.7 1599.0,1349.9 C1609.6,1354.1 1613.0,1349.9 1620.0,1349.9" fill="none" stroke="#d1ddf0" stroke-width="5.066956207021354" stroke-linejoin="round" stroke-linecap="round" />
<path d="M1222.7,1357.1 C1232.3,1358.9 1232.3,1359.9 1251.6,1362.5 C1270.9,1365.2 1265.5,1363.9 1280.6,1365.1 C1295.6,1366.3 1291.4,1365.8 1296.8,1366.2" fill="none" stroke="#d1ddf0" stroke-width="5.79080709373869" stroke-linejoin="round" stroke-linecap="round" />
<path d="M1262.5,982.6 C1268.5,986.8 1268.5,987.4 1280.6,995.2 C1292.6,1003.1 1281.8,1003.7 1298.6,1006.1 C1315.5,1008.5 1320.4,1003.7 1331.2,1002.5" fill="none" stroke="#d1ddf0" stroke-width="4.705030763662686" stroke-linejoin="round" stroke-linecap="round" />
<path d="M1324.0,1167.1 C1328.8,1168.9 1327.6,1168.9 1338.5,1172.6 C1349.3,1176.2 1345.1,1177.4 1356.6,1178.0 C1368.0,1178.6 1367.4,1175.6 1372.8,1174.4" fill="none" stroke="#d1ddf0" stroke-width="4.3431053203040175" stroke-linejoin="round" stroke-linecap="round" />
<path d="M1307.7,1174.4 C1303.5,1177.4 1301.1,1171.9 1295.0,1183.4 C1289.0,1194.9 1291.4,1200.3 1289.6,1208.7" fill="none" stroke="#d1ddf0" stroke-width="3.257328990228013" stroke-linejoin="round" stroke-linecap="round" />
<path d="M1226.3,1210.5 C1231.1,1208.1 1229.9,1206.1 1240.7,1203.3 C1251.6,1200.5 1248.0,1201.0 1258.8,1202.2 C1269.7,1203.4 1268.5,1205.4 1273.3,1206.9" fill="none" stroke="#d1ddf0" stroke-width="3.6192544335866814" stroke-linejoin="round" stroke-linecap="round" />
<path d="M1291.4,875.8 C1296.2,878.8 1294.4,880.0 1305.9,884.9 C1317.3,889.7 1319.2,888.5 1325.8,890.3" fill="none" stroke="#d1ddf0" stroke-width="3.257328990228013" stroke-linejoin="round" stroke-linecap="round" />
<path d="M1175.6,1302.8 C1172.0,1295.6 1169.0,1294.4 1164.8,1281.1 C1160.5,1267.8 1163.5,1269.1 1162.9,1263.0" fill="none" stroke="#d1ddf0" stroke-width="3.6192544335866814" stroke-linejoin="round" stroke-linecap="round" />
<path d="M1419.9,836.0 L1472.4,836.0 L1474.2,850.5 L1466.9,872.2 L1450.6,877.6 L1436.2,870.4 L1418.1,868.6Z" fill="#f3ead4" />
<path d="M1506.7,1102.0 L1526.6,1100.2 L1534.6,1114.6 L1532.1,1134.6 L1521.2,1136.4 L1508.5,1125.5Z" fill="#f3ead4" />
<path d="M1620.0,236.0 L1652.6,236.0 L1659.8,257.7 L1670.7,279.4 L1656.2,288.5 L1645.3,279.4 L1634.5,265.0 L1620.0,257.7Z" fill="#f3ead4" />
<path d="M1620.0,322.9 L1634.5,321.0 L1645.3,340.9 L1638.1,362.7 L1620.0,369.9Z" fill="#f3ead4" />
<path d="M1609.9,319.2 L1620.0,321.0 L1620.0,366.3 L1613.5,355.4Z" fill="#f3ead4" />
<path d="M1428.9,818.6 L1443.4,811.4 L1454.3,822.2 L1459.7,836.0 L1421.7,836.0Z" fill="#f3ead4" />
<path d="M1936.6,836.0 C1942.1,846.9 1951.7,848.1 1952.9,868.6 C1954.1,889.1 1942.7,879.4 1940.3,897.5 C1937.9,915.6 1939.1,908.4 1945.7,922.9 C1952.3,937.3 1943.3,934.3 1960.2,940.9 C1977.1,947.6 1973.4,943.4 1996.4,942.8 C2019.3,942.2 2010.8,944.6 2028.9,939.1 C2047.0,933.7 2039.2,937.3 2050.6,926.5 C2062.1,915.6 2054.9,911.4 2063.3,906.6 C2071.7,901.7 2066.9,901.7 2076.0,912.0 C2085.0,922.2 2073.6,914.4 2090.4,937.3 C2107.3,960.2 2111.0,957.8 2126.6,980.8 C2142.3,1003.7 2133.3,986.8 2137.5,1006.1 C2141.7,1025.4 2139.3,1015.7 2139.3,1038.7 C2139.3,1061.6 2136.3,1055.5 2137.5,1074.8 C2138.7,1094.1 2134.5,1086.3 2142.9,1096.6 C2151.4,1106.8 2149.0,1100.8 2162.8,1105.6 C2176.7,1110.4 2171.3,1105.6 2184.5,1111.0 C2197.8,1116.5 2193.0,1113.4 2202.6,1121.9 C2212.3,1130.3 2208.1,1126.7 2213.5,1136.4 C2218.9,1146.0 2216.5,1135.2 2218.9,1150.8 C2221.3,1166.5 2220.1,1172.6 2220.7,1183.4" fill="none" stroke="#d1ddf0" stroke-width="3.9811798769453492" stroke-linejoin="round" stroke-linecap="round" />
<path d="M2220.7,1192.5 C2213.5,1198.5 2213.5,1201.5 2199.0,1210.5 C2184.5,1219.6 2193.0,1215.4 2177.3,1219.6 C2161.6,1223.8 2171.3,1220.8 2152.0,1223.2 C2132.7,1225.6 2139.9,1225.3 2119.4,1226.8 C2098.9,1228.4 2108.5,1226.7 2090.4,1227.9 C2072.4,1229.1 2080.8,1231.1 2065.1,1230.5 C2049.4,1229.8 2055.5,1225.5 2043.4,1226.1 C2031.3,1226.7 2039.8,1224.2 2028.9,1232.3 C2018.1,1240.3 2026.5,1242.5 2010.8,1250.4 C1995.2,1258.2 1997.6,1251.6 1981.9,1255.8 C1966.2,1260.0 1980.7,1257.6 1963.8,1263.0 C1946.9,1268.4 1949.3,1265.4 1931.2,1272.1 C1913.1,1278.7 1924.0,1276.3 1909.5,1282.9 C1895.0,1289.6 1899.9,1285.3 1887.8,1292.0 C1875.7,1298.6 1885.4,1297.4 1873.3,1302.8 C1861.3,1308.3 1868.5,1304.0 1851.6,1308.3 C1834.7,1312.5 1842.0,1313.7 1822.7,1315.5 C1803.4,1317.3 1808.2,1317.9 1793.7,1313.7 C1779.2,1309.5 1791.3,1308.3 1779.2,1302.8 C1767.2,1297.4 1775.6,1295.0 1757.5,1297.4 C1739.4,1299.8 1743.6,1301.6 1724.9,1310.1 C1706.2,1318.5 1714.7,1313.7 1701.4,1322.7 C1688.2,1331.8 1696.6,1334.2 1685.1,1337.2 C1673.7,1340.2 1681.5,1333.0 1667.0,1331.8 C1652.6,1330.6 1657.4,1330.6 1641.7,1333.6 C1626.0,1336.6 1627.2,1338.4 1620.0,1340.8" fill="none" stroke="#d1ddf0" stroke-width="4.3431053203040175" stroke-linejoin="round" stroke-linecap="round" />
<path d="M2045.2,1226.8 C2039.8,1229.0 2039.8,1225.7 2028.9,1233.3 C2018.1,1240.9 2018.1,1244.2 2012.6,1249.6" fill="none" stroke="#d1ddf0" stroke-width="8.686210640608035" stroke-linejoin="round" stroke-linecap="round" />
<path d="M1793.7,836.0 C1797.3,845.7 1802.1,846.9 1804.6,865.0 C1807.0,883.0 1803.4,868.6 1800.9,890.3 C1798.5,912.0 1797.3,899.9 1797.3,930.1 C1797.3,960.2 1794.9,956.6 1800.9,980.8 C1807.0,1004.9 1803.4,986.8 1815.4,1002.5 C1827.5,1018.1 1817.8,1012.1 1837.1,1027.8 C1856.4,1043.5 1854.0,1036.2 1873.3,1049.5 C1892.6,1062.8 1884.2,1054.3 1895.0,1067.6 C1905.9,1080.9 1896.2,1079.1 1905.9,1089.3 C1915.5,1099.6 1903.5,1089.9 1924.0,1098.4 C1944.5,1106.8 1948.1,1108.0 1967.4,1114.6 C1986.7,1121.3 1969.8,1119.5 1981.9,1118.3 C1993.9,1117.1 1989.1,1117.1 2003.6,1111.0 C2018.1,1105.0 2008.4,1107.4 2025.3,1100.2 C2042.2,1092.9 2038.6,1099.0 2054.3,1089.3 C2069.9,1079.7 2061.5,1083.3 2072.4,1071.2 C2083.2,1059.2 2079.6,1061.6 2086.8,1053.1 C2094.1,1044.7 2089.2,1041.1 2094.1,1045.9 C2098.9,1050.7 2092.9,1054.3 2101.3,1067.6 C2109.7,1080.9 2106.1,1076.0 2119.4,1085.7 C2132.7,1095.3 2133.9,1092.9 2141.1,1096.6" fill="none" stroke="#d1ddf0" stroke-width="1.4477017734346724" stroke-linejoin="round" stroke-linecap="round" />
<path d="M1679.7,1339.0 C1681.5,1346.3 1676.1,1345.0 1685.1,1360.7 C1694.2,1376.4 1703.2,1368.0 1706.9,1386.1 C1710.5,1404.2 1700.8,1398.4 1696.0,1415.0 C1691.2,1431.7 1693.6,1429.0 1692.4,1436.0" fill="none" stroke="#d1ddf0" stroke-width="1.2667390517553385" stroke-linejoin="round" stroke-linecap="round" />
<path d="M1753.9,1306.4 C1759.9,1310.1 1759.9,1308.9 1772.0,1317.3 C1784.1,1325.7 1776.8,1320.9 1790.1,1331.8 C1803.4,1342.6 1800.9,1334.2 1811.8,1349.9 C1822.7,1365.6 1815.4,1364.3 1822.7,1378.8 C1829.9,1393.3 1835.9,1381.2 1833.5,1393.3 C1831.1,1405.4 1827.5,1402.9 1815.4,1415.0 C1803.4,1427.1 1805.8,1422.5 1797.3,1429.5 C1788.9,1436.5 1792.5,1433.8 1790.1,1436.0" fill="none" stroke="#d1ddf0" stroke-width="1.2667390517553385" stroke-linejoin="round" stroke-linecap="round" />
<path d="M2707.4,1024.2 C2703.8,1014.5 2705.0,1013.3 2696.5,995.2 C2688.1,977.1 2695.3,986.8 2682.1,969.9 C2668.8,953.0 2671.2,961.5 2656.7,944.6 C2642.3,927.7 2648.3,928.9 2638.6,919.2 C2629.0,909.6 2639.8,914.4 2627.8,915.6 C2615.7,916.8 2619.3,922.2 2602.4,922.9 C2585.6,923.5 2592.8,919.2 2577.1,917.4 C2561.4,915.6 2566.3,909.6 2555.4,917.4 C2544.5,925.3 2548.2,933.1 2544.5,940.9" fill="none" stroke="#d1ddf0" stroke-width="1.8096272167933407" stroke-linejoin="round" stroke-linecap="round" />
<path d="M2544.5,940.9 C2537.3,943.4 2534.9,941.5 2522.8,948.2 C2510.8,954.8 2520.4,956.6 2508.4,960.8 C2496.3,965.1 2503.5,959.6 2486.6,960.8 C2469.8,962.1 2467.3,963.3 2457.7,964.5" fill="none" stroke="#d1ddf0" stroke-width="3.257328990228013" stroke-linejoin="round" stroke-linecap="round" />
<path d="M2457.7,964.5 C2451.7,967.5 2452.9,975.3 2439.6,973.5 C2426.3,971.7 2431.2,965.7 2417.9,959.0 C2404.6,952.4 2411.9,953.6 2399.8,953.6 C2387.7,953.6 2396.2,957.8 2381.7,959.0 C2367.2,960.2 2370.8,953.6 2356.4,957.2 C2341.9,960.8 2350.3,959.6 2338.3,969.9 C2326.2,980.1 2328.6,974.7 2320.2,988.0 C2311.7,1001.3 2316.6,995.2 2312.9,1009.7 C2309.3,1024.2 2316.6,1018.1 2309.3,1031.4 C2302.1,1044.7 2302.1,1037.4 2291.2,1049.5 C2280.4,1061.6 2284.0,1058.0 2276.8,1067.6 C2269.5,1077.3 2278.0,1071.2 2269.5,1078.5 C2261.1,1085.7 2262.3,1078.5 2251.4,1089.3 C2240.6,1100.2 2243.0,1095.3 2236.9,1111.0 C2230.9,1126.7 2233.9,1119.5 2233.3,1136.4 C2232.7,1153.2 2236.3,1147.2 2235.1,1161.7 C2233.9,1176.2 2231.5,1173.8 2229.7,1179.8" fill="none" stroke="#d1ddf0" stroke-width="2.1715526601520088" stroke-linejoin="round" stroke-linecap="round" />
<path d="M2132.0,984.4 C2133.2,992.8 2133.8,986.8 2135.6,1009.7 C2137.4,1032.6 2131.4,1023.0 2137.4,1053.1 C2143.5,1083.3 2138.6,1080.9 2153.7,1100.2 C2168.8,1119.5 2165.8,1103.8 2182.7,1111.0 C2199.6,1118.3 2197.1,1118.3 2204.4,1121.9" fill="none" stroke="#d1ddf0" stroke-width="3.9811798769453492" stroke-linejoin="round" stroke-linecap="round" />
<path d="M2204.4,1121.9 C2210.4,1129.1 2213.4,1130.3 2222.5,1143.6 C2231.5,1156.9 2229.1,1149.6 2231.5,1161.7 C2233.9,1173.8 2230.3,1173.8 2229.7,1179.8" fill="none" stroke="#d1ddf0" stroke-width="11.58161418747738" stroke-linejoin="round" stroke-linecap="round" />
<path d="M2229.7,1179.8 C2224.9,1185.8 2227.3,1187.0 2215.2,1197.9 C2203.2,1208.7 2209.2,1203.9 2193.5,1212.4 C2177.8,1220.8 2183.9,1219.0 2168.2,1223.2 C2152.5,1227.4 2158.5,1225.6 2146.5,1225.0 C2134.4,1224.4 2136.8,1222.6 2132.0,1221.4" fill="none" stroke="#d1ddf0" stroke-width="4.705030763662686" stroke-linejoin="round" stroke-linecap="round" />
<path d="M1221.2,1436.0 C1218.1,1440.9 1219.9,1442.2 1211.9,1450.8 C1203.9,1459.4 1203.3,1453.2 1197.2,1461.8 C1191.0,1470.5 1203.3,1472.9 1193.5,1476.6 C1183.6,1480.3 1184.9,1469.2 1167.6,1472.9 C1150.4,1476.6 1157.8,1482.8 1141.8,1487.7 C1125.8,1492.6 1130.7,1490.8 1119.7,1487.7 C1108.6,1484.6 1115.4,1477.2 1108.6,1478.4 C1101.8,1479.7 1105.5,1482.1 1099.4,1491.4 C1093.2,1500.6 1090.7,1495.1 1090.1,1506.1 C1089.5,1517.2 1095.1,1518.4 1097.5,1524.6" fill="none" stroke="#d1ddf0" stroke-width="1.6611295681063123" stroke-linejoin="round" stroke-linecap="round" />
<path d="M1093.8,1532.0 C1096.9,1535.7 1105.5,1533.2 1103.1,1543.0 C1100.6,1552.9 1093.2,1550.4 1086.4,1561.5 C1079.7,1572.6 1084.0,1571.3 1082.8,1576.3" fill="none" stroke="#d1ddf0" stroke-width="1.4765596160944998" stroke-linejoin="round" stroke-linecap="round" />
<path d="M1309.8,1709.9 C1314.7,1709.4 1316.3,1713.6 1324.5,1708.4 C1332.8,1703.2 1328.7,1697.6 1334.5,1694.4 C1340.3,1691.2 1339.4,1697.3 1341.9,1698.8" fill="none" stroke="#d1ddf0" stroke-width="6.275378368401624" stroke-linejoin="round" stroke-linecap="round" />
<path d="M1228.6,1803.3 C1232.9,1799.0 1232.2,1794.0 1241.5,1790.4 C1250.7,1786.7 1246.4,1794.0 1256.2,1792.2 C1266.1,1790.4 1266.1,1787.3 1271.0,1784.8" fill="none" stroke="#d1ddf0" stroke-width="3.3222591362126246" stroke-linejoin="round" stroke-linecap="round" />
<path d="M1632.0,1661.2 C1624.9,1664.9 1623.9,1662.4 1610.6,1672.2 C1597.3,1682.1 1599.5,1673.5 1592.1,1690.7 C1584.8,1707.9 1592.1,1704.2 1588.4,1723.9 C1584.8,1743.6 1584.8,1728.8 1581.1,1749.8 C1577.4,1770.7 1579.8,1762.1 1577.4,1786.7 C1574.9,1811.3 1571.2,1802.7 1573.7,1823.6 C1576.1,1844.5 1582.3,1831.0 1584.8,1849.4 C1587.2,1867.9 1584.8,1856.8 1581.1,1878.9 C1577.4,1901.1 1579.8,1893.7 1573.7,1915.9 C1567.5,1938.0 1568.8,1925.7 1562.6,1945.4 C1556.5,1965.1 1563.8,1957.7 1555.2,1974.9 C1546.6,1992.1 1544.1,1979.8 1536.8,1997.1 C1529.4,2014.3 1534.3,2016.7 1533.1,2026.6" fill="none" stroke="#d1ddf0" stroke-width="1.6611295681063123" stroke-linejoin="round" stroke-linecap="round" />
<path d="M1534.9,1751.6 C1542.9,1752.2 1544.8,1754.1 1558.9,1753.4 C1573.1,1752.8 1570.0,1747.3 1577.4,1749.8 C1584.8,1752.2 1579.8,1757.1 1581.1,1760.8" fill="none" stroke="#d1ddf0" stroke-width="2.9531192321889996" stroke-linejoin="round" stroke-linecap="round" />
<path d="M1020.0,1934.3 L1027.4,1934.3 L1029.2,1952.8 L1020.0,1957.2Z" fill="#d1ddf0" />
<path d="M1171.3,2011.8 C1176.3,2016.7 1175.0,2016.7 1186.1,2026.6 C1197.2,2036.4 1198.4,2036.4 1204.6,2041.4" fill="none" stroke="#d1ddf0" stroke-width="3.3222591362126246" stroke-linejoin="round" stroke-linecap="round" />
<path d="M1625.4,1528.3 C1624.1,1535.7 1621.7,1535.7 1621.7,1550.4 C1621.7,1565.2 1621.9,1564.0 1625.4,1572.6 C1628.8,1581.2 1629.8,1575.0 1632.0,1576.3" fill="none" stroke="#d1ddf0" stroke-width="1.8456995201181248" stroke-linejoin="round" stroke-linecap="round" />
<path d="M1440.8,2022.9 L1444.5,2048.0" fill="none" stroke="#d1ddf0" stroke-width="1.4765596160944998" stroke-linejoin="round" stroke-linecap="round" />
<path d="M1688.6,1436.0 C1684.9,1442.2 1689.8,1442.2 1677.5,1454.5 C1665.2,1466.8 1665.2,1456.9 1651.7,1472.9 C1638.1,1488.9 1646.8,1482.8 1636.9,1502.4 C1627.1,1522.1 1626.5,1512.3 1622.1,1532.0 C1617.8,1551.7 1619.1,1544.3 1624.0,1561.5 C1628.9,1578.7 1633.2,1566.4 1636.9,1583.6 C1640.6,1600.9 1633.8,1594.7 1635.1,1613.2 C1636.3,1631.6 1642.4,1624.3 1640.6,1639.0 C1638.8,1653.8 1638.1,1647.6 1629.5,1657.5 C1620.9,1667.3 1624.6,1663.0 1614.8,1668.5 C1604.9,1674.1 1604.9,1672.2 1600.0,1674.1" fill="none" stroke="#d1ddf0" stroke-width="1.6611295681063123" stroke-linejoin="round" stroke-linecap="round" />
<path d="M1788.3,1436.0 C1785.8,1443.4 1782.7,1436.0 1780.9,1458.1 C1779.0,1480.3 1775.3,1477.8 1782.7,1502.4 C1790.1,1527.0 1798.7,1514.7 1803.0,1532.0 C1807.3,1549.2 1796.9,1536.9 1795.6,1554.1 C1794.4,1571.3 1796.9,1561.5 1799.3,1583.6 C1801.8,1605.8 1795.6,1597.2 1803.0,1620.6 C1810.4,1643.9 1814.7,1635.3 1821.5,1653.8 C1828.2,1672.2 1817.2,1663.6 1823.3,1675.9 C1829.5,1688.2 1823.3,1687.0 1839.9,1690.7 C1856.5,1694.4 1854.7,1685.8 1873.1,1687.0 C1891.6,1688.2 1879.3,1699.3 1895.3,1694.4 C1911.3,1689.5 1901.4,1682.1 1921.1,1672.2 C1940.8,1662.4 1932.8,1670.4 1954.4,1664.9 C1975.9,1659.3 1968.5,1656.9 1985.7,1655.6 C2003.0,1654.4 1991.3,1650.7 2006.0,1661.2 C2020.8,1671.6 2022.0,1666.1 2030.0,1687.0 C2038.0,1707.9 2029.4,1699.3 2030.0,1723.9 C2030.6,1748.5 2027.6,1741.1 2031.9,1760.8 C2036.2,1780.5 2029.4,1770.1 2042.9,1783.0 C2056.5,1795.9 2047.9,1790.4 2072.5,1799.6 C2097.1,1808.8 2092.2,1805.1 2116.8,1810.7 C2141.4,1816.2 2126.6,1813.1 2146.3,1816.2 C2166.0,1819.3 2153.9,1820.5 2175.8,1819.9 C2197.7,1819.3 2199.9,1816.2 2212.0,1814.3" fill="none" stroke="#d1ddf0" stroke-width="1.6611295681063123" stroke-linejoin="round" stroke-linecap="round" />
<path d="M2120.0,1810.7 C2124.9,1811.9 2122.5,1811.9 2134.8,1814.3 C2147.1,1816.8 2143.4,1816.2 2156.9,1818.0 C2170.4,1819.9 2158.1,1820.7 2175.4,1819.9 C2192.6,1819.0 2185.2,1816.7 2208.6,1815.5 C2232.0,1814.2 2225.8,1819.0 2245.5,1816.2 C2265.2,1813.4 2252.3,1811.9 2267.6,1807.0 C2283.0,1802.0 2276.9,1800.8 2291.6,1801.4 C2306.4,1802.0 2300.9,1801.4 2311.9,1808.8 C2323.0,1816.2 2319.9,1812.5 2324.9,1823.6 C2329.8,1834.6 2323.6,1829.7 2326.7,1842.0 C2329.8,1854.3 2329.8,1847.6 2334.1,1860.5 C2338.4,1873.4 2337.8,1874.0 2339.6,1880.8" fill="none" stroke="#d1ddf0" stroke-width="1.6611295681063123" stroke-linejoin="round" stroke-linecap="round" />
<path d="M2732.0,1679.6 C2731.6,1699.3 2733.1,1712.8 2730.9,1738.7 C2728.7,1764.5 2732.1,1744.8 2725.4,1757.1 C2718.6,1769.4 2719.2,1763.3 2710.6,1775.6 C2702.0,1787.9 2702.0,1783.0 2699.5,1794.0 C2697.1,1805.1 2704.4,1797.7 2703.2,1808.8 C2702.0,1819.9 2694.6,1815.0 2695.8,1827.3 C2697.1,1839.6 2705.1,1832.2 2706.9,1845.7 C2708.7,1859.3 2700.1,1857.4 2701.4,1867.9 C2702.6,1878.3 2702.6,1874.0 2710.6,1877.1 C2718.6,1880.2 2718.2,1878.9 2725.4,1877.1 C2732.5,1875.3 2729.8,1873.4 2732.0,1871.6" fill="none" stroke="#d1ddf0" stroke-width="1.8456995201181248" stroke-linejoin="round" stroke-linecap="round" />
<path d="M1020.0,1138.2 C1024.8,1135.2 1022.4,1133.9 1034.5,1129.1 C1046.5,1124.3 1041.7,1124.3 1056.2,1123.7 C1070.7,1123.1 1064.6,1121.9 1077.9,1127.3 C1091.2,1132.7 1085.1,1132.1 1096.0,1140.0 C1106.9,1147.8 1100.8,1143.6 1110.5,1150.8 C1120.1,1158.1 1116.5,1152.0 1124.9,1161.7 C1133.4,1171.3 1128.6,1167.7 1135.8,1179.8 C1143.0,1191.9 1139.4,1185.8 1146.7,1197.9 C1153.9,1209.9 1152.1,1201.5 1157.5,1216.0 C1162.9,1230.5 1160.5,1223.2 1162.9,1241.3 C1165.4,1259.4 1162.9,1251.0 1164.8,1270.3 C1166.6,1289.6 1164.8,1281.1 1168.4,1299.2 C1172.0,1317.3 1169.6,1310.1 1175.6,1324.5 C1181.6,1339.0 1175.6,1333.0 1186.5,1342.6 C1197.3,1352.3 1193.7,1347.5 1208.2,1353.5 C1222.7,1359.5 1215.4,1355.9 1229.9,1360.7 C1244.4,1365.6 1237.1,1363.1 1251.6,1368.0 C1266.1,1372.8 1258.8,1371.6 1273.3,1375.2 C1287.8,1378.8 1280.6,1378.8 1295.0,1378.8 C1309.5,1378.8 1302.3,1379.4 1316.7,1375.2 C1331.2,1371.0 1324.0,1373.4 1338.5,1366.2 C1352.9,1358.9 1345.7,1361.9 1360.2,1353.5 C1374.6,1345.0 1367.4,1350.5 1381.9,1340.8 C1396.4,1331.2 1391.5,1333.0 1403.6,1324.5 C1415.7,1316.1 1407.2,1319.7 1418.1,1315.5 C1428.9,1311.3 1424.1,1312.7 1436.2,1311.9 C1448.2,1311.0 1438.6,1314.2 1454.3,1313.0 C1469.9,1311.8 1466.3,1311.0 1483.2,1308.3 C1500.1,1305.5 1490.4,1302.8 1504.9,1304.6 C1519.4,1306.4 1513.4,1308.3 1526.6,1313.7 C1539.9,1319.1 1530.3,1317.9 1544.7,1320.9 C1559.2,1323.9 1555.6,1317.3 1570.1,1322.7 C1584.5,1328.2 1578.5,1328.2 1588.2,1337.2 C1597.8,1346.3 1588.4,1345.7 1599.0,1349.9 C1609.6,1354.1 1613.0,1349.9 1620.0,1349.9" fill="none" stroke="#a9aeb8" stroke-width="1.1" stroke-linejoin="round" stroke-linecap="round" stroke-dasharray="5 3"/>
<path d="M1620.0,1340.8 C1627.2,1338.4 1626.0,1336.6 1641.7,1333.6 C1657.4,1330.6 1652.6,1330.6 1667.0,1331.8 C1681.5,1333.0 1673.7,1340.2 1685.1,1337.2 C1696.6,1334.2 1688.2,1331.8 1701.4,1322.7 C1714.7,1313.7 1706.2,1318.5 1724.9,1310.1 C1743.6,1301.6 1739.4,1299.8 1757.5,1297.4 C1775.6,1295.0 1767.2,1297.4 1779.2,1302.8 C1791.3,1308.3 1779.2,1309.5 1793.7,1313.7 C1808.2,1317.9 1803.4,1317.3 1822.7,1315.5 C1842.0,1313.7 1834.7,1312.5 1851.6,1308.3 C1868.5,1304.0 1861.3,1308.3 1873.3,1302.8 C1885.4,1297.4 1875.7,1298.6 1887.8,1292.0 C1899.9,1285.3 1895.0,1289.6 1909.5,1282.9 C1924.0,1276.3 1913.1,1278.7 1931.2,1272.1 C1949.3,1265.4 1946.9,1268.4 1963.8,1263.0 C1980.7,1257.6 1966.2,1260.0 1981.9,1255.8 C1997.6,1251.6 1995.2,1258.2 2010.8,1250.4 C2026.5,1242.5 2018.1,1240.3 2028.9,1232.3 C2039.8,1224.2 2031.3,1226.7 2043.4,1226.1 C2055.5,1225.5 2049.4,1229.8 2065.1,1230.5 C2080.8,1231.1 2072.4,1229.1 2090.4,1227.9 C2108.5,1226.7 2098.9,1228.4 2119.4,1226.8 C2139.9,1225.3 2132.7,1225.6 2152.0,1223.2 C2171.3,1220.8 2161.6,1223.8 2177.3,1219.6 C2193.0,1215.4 2184.5,1219.6 2199.0,1210.5 C2213.5,1201.5 2213.5,1198.5 2220.7,1192.5" fill="none" stroke="#a9aeb8" stroke-width="1.1" stroke-linejoin="round" stroke-linecap="round" stroke-dasharray="5 3"/>
<path d="M2132.0,1221.4 L2146.5,1225.0 L2168.2,1223.2 L2193.5,1212.4 L2215.2,1197.9 L2732.7,1197.2" fill="none" stroke="#b9b4a6" stroke-width="1.1" stroke-linejoin="round" stroke-linecap="round" stroke-dasharray="5 3"/>
<path d="M2732.0,1679.6 L2730.9,1738.7 L2725.4,1757.1 L2710.6,1775.6 L2699.5,1794.0 L2703.2,1808.8 L2695.8,1827.3 L2706.9,1845.7 L2701.4,1867.9 L2710.6,1877.1 L2725.4,1877.1 L2732.0,1871.6" fill="none" stroke="#a9aeb8" stroke-width="1.1" stroke-linejoin="round" stroke-linecap="round" stroke-dasharray="5 3"/>
<path d="M1286.7,236.0 L1289.6,250.5 L1305.9,272.2 L1320.4,297.5 L1327.6,330.1 L1330.5,373.5 L1325.8,409.7 L1323.3,424.2 L1309.5,449.5 L1305.9,456.7" fill="none" stroke="#8b8b8b" stroke-width="3.0" stroke-linejoin="round" stroke-linecap="round" />
<path d="M1305.9,456.7 L1295.0,467.6 L1289.6,496.6 L1289.6,525.5 L1287.8,561.7 L1289.6,583.4 L1298.6,601.5 L1304.1,616.0 L1298.6,637.7 L1295.0,670.3 L1289.6,681.1 L1273.3,692.0 L1258.8,706.4 L1251.6,717.3 L1248.0,728.2 L1237.1,739.0 L1215.4,753.5 L1190.1,764.3 L1164.8,771.6 L1139.4,778.8 L1128.6,789.7 L1121.3,815.0 L1115.9,836.0" fill="none" stroke="#8b8b8b" stroke-width="3.0" stroke-linejoin="round" stroke-linecap="round" />
<path d="M1305.9,456.7 L1320.4,471.2 L1327.6,489.3 L1329.4,518.3 L1327.6,554.5 L1325.8,583.4 L1320.4,601.5 L1318.6,626.8 L1309.5,644.9 L1309.5,670.3 L1307.7,702.8 L1309.5,713.7" fill="none" stroke="#8b8b8b" stroke-width="3.0" stroke-linejoin="round" stroke-linecap="round" />
<path d="M1356.6,407.9 L1367.4,424.2 L1383.7,443.0 L1418.1,444.1 L1454.3,441.5 L1479.6,451.3 L1504.9,464.0 L1526.6,485.7 L1552.0,503.8 L1584.5,502.0 L1620.0,502.0" fill="none" stroke="#8b8b8b" stroke-width="1.3" stroke-linejoin="round" stroke-linecap="round" />
<path d="M1327.6,485.7 L1338.5,471.2 L1360.2,456.7 L1383.7,443.0" fill="none" stroke="#8b8b8b" stroke-width="2.2" stroke-linejoin="round" stroke-linecap="round" />
<path d="M1327.6,556.3 L1352.9,561.7 L1367.4,572.6 L1389.1,579.8 L1407.2,587.0 L1425.3,585.2 L1443.4,601.5 L1465.1,612.4 L1490.4,626.8 L1519.4,634.1 L1533.9,632.3 L1537.5,619.6 L1542.9,625.0 L1552.0,648.5 L1562.8,659.4 L1577.3,677.5 L1599.0,688.4 L1613.5,702.8 L1620.0,706.4" fill="none" stroke="#8b8b8b" stroke-width="3.0" stroke-linejoin="round" stroke-linecap="round" />
<path d="M1410.8,588.8 L1403.6,601.5 L1385.5,616.0 L1367.4,630.5 L1345.7,644.9 L1331.2,670.3 L1309.5,672.1 L1295.0,673.9" fill="none" stroke="#8b8b8b" stroke-width="2.2" stroke-linejoin="round" stroke-linecap="round" />
<path d="M1291.4,530.9 L1327.6,534.6 L1338.5,536.4 L1342.1,523.7 L1351.1,520.1" fill="none" stroke="#8b8b8b" stroke-width="2.2" stroke-linejoin="round" stroke-linecap="round" />
<path d="M1273.3,558.1 L1289.6,556.3 L1327.6,556.3" fill="none" stroke="#8b8b8b" stroke-width="2.2" stroke-linejoin="round" stroke-linecap="round" />
<path d="M1300.5,416.9 L1323.3,416.2" fill="none" stroke="#8b8b8b" stroke-width="1.3" stroke-linejoin="round" stroke-linecap="round" />
<path d="M1302.3,438.7 L1305.9,456.7" fill="none" stroke="#8b8b8b" stroke-width="1.3" stroke-linejoin="round" stroke-linecap="round" />
<path d="M1289.6,605.1 L1305.9,606.9 L1320.4,603.3" fill="none" stroke="#8b8b8b" stroke-width="2.2" stroke-linejoin="round" stroke-linecap="round" />
<path d="M1289.6,583.4 L1295.0,597.9 L1304.1,616.0" fill="none" stroke="#8b8b8b" stroke-width="2.2" stroke-linejoin="round" stroke-linecap="round" />
<path d="M1304.1,616.0 L1305.9,641.3 L1309.5,644.9" fill="none" stroke="#8b8b8b" stroke-width="1.3" stroke-linejoin="round" stroke-linecap="round" />
<path d="M1022.1,346.7 L1061.0,353.9 L1087.7,361.1 L1099.0,373.4 L1106.1,365.2 L1122.5,364.2 L1134.8,369.3 L1141.0,379.6 L1134.8,389.8 L1135.9,406.2 L1134.4,412.1 L1138.6,429.0 L1133.8,448.3 L1136.2,459.1 L1129.0,461.5 L1122.9,472.4 L1127.7,479.6 L1136.2,490.5 L1132.6,506.2 L1130.5,517.4 L1121.8,528.2 L1118.9,536.2 L1108.0,543.4 L1103.7,552.8 L1099.3,562.2 L1090.7,570.9 L1091.4,574.5 L1088.5,581.1 L1087.0,590.5 L1074.0,606.4 L1071.8,607.1 L1072.1,606.8 L1070.2,614.5 L1065.4,626.1 L1061.5,638.6 L1059.1,645.4 L1058.6,657.9 L1052.8,674.3 L1059.6,680.1 L1062.5,690.7 L1067.3,700.4 L1068.3,713.9 L1076.0,722.6 L1076.9,735.1 L1075.0,746.7 L1079.8,755.4 L1087.6,757.8 L1094.3,760.0" fill="none" stroke="#8b8b8b" stroke-width="1.3" stroke-linejoin="round" stroke-linecap="round" />
<path d="M1114.1,771.6 L1128.6,789.7" fill="none" stroke="#8b8b8b" stroke-width="1.3" stroke-linejoin="round" stroke-linecap="round" />
<path d="M1134.4,408.4 L1150.7,412.1 L1167.6,426.5 L1182.0,433.8 L1191.7,438.6 L1203.7,439.8 L1211.0,446.4 L1202.5,460.3 L1200.1,479.6 L1192.9,491.7 L1189.3,508.6 L1189.3,520.6 L1184.4,525.5 L1182.0,544.8 L1186.9,555.6" fill="none" stroke="#8b8b8b" stroke-width="1.3" stroke-linejoin="round" stroke-linecap="round" />
<path d="M1189.3,523.0 L1196.5,527.9 L1201.3,529.7" fill="none" stroke="#8b8b8b" stroke-width="1.3" stroke-linejoin="round" stroke-linecap="round" />
<path d="M1184.4,525.5 L1182.6,536.3 L1183.2,546.0 L1187.5,555.6" fill="none" stroke="#8b8b8b" stroke-width="2.2" stroke-linejoin="round" stroke-linecap="round" />
<path d="M1190.1,550.8 L1186.5,578.0 L1200.9,592.5 L1206.4,616.0 L1208.2,634.1 L1217.2,655.8 L1224.5,675.7 L1226.3,684.7" fill="none" stroke="#8b8b8b" stroke-width="2.2" stroke-linejoin="round" stroke-linecap="round" />
<path d="M1020.0,272.2 L1034.5,266.8 L1054.4,236.0" fill="none" stroke="#8b8b8b" stroke-width="1.3" stroke-linejoin="round" stroke-linecap="round" />
<path d="M1020.0,775.2 L1041.7,769.8 L1063.4,775.2 L1077.9,780.6 L1097.8,775.2" fill="none" stroke="#8b8b8b" stroke-width="1.3" stroke-linejoin="round" stroke-linecap="round" />
<path d="M1251.6,717.3 L1251.6,728.2 L1295.0,728.9 L1300.5,720.9 L1302.3,710.1 L1309.5,713.7 L1320.4,715.5 L1331.2,724.5" fill="none" stroke="#8b8b8b" stroke-width="2.2" stroke-linejoin="round" stroke-linecap="round" />
<path d="M1309.5,670.3 L1316.7,672.1" fill="none" stroke="#8b8b8b" stroke-width="2.2" stroke-linejoin="round" stroke-linecap="round" />
<path d="M1324.0,672.1 L1334.8,655.8 L1363.8,634.1 L1381.9,616.0" fill="none" stroke="#8b8b8b" stroke-width="0.1" stroke-linejoin="round" stroke-linecap="round" />
<path d="M1620.0,492.9 L1634.5,485.7 L1636.3,478.5 L1647.1,474.1 L1659.8,477.7 L1674.3,474.8 L1690.6,471.2 L1714.1,480.3 L1726.8,482.8 L1728.6,511.0 L1732.2,532.7 L1737.6,554.5 L1752.1,550.8 L1768.4,567.1 L1782.8,576.2 L1800.9,579.8 L1817.2,594.3 L1837.1,599.7 L1848.0,601.5" fill="none" stroke="#8b8b8b" stroke-width="1.3" stroke-linejoin="round" stroke-linecap="round" />
<path d="M1768.4,567.1 L1759.3,576.2 L1752.1,597.9 L1750.3,619.6 L1755.7,632.3 L1768.4,637.7 L1776.3,648.5 L1773.8,657.6 L1753.9,659.4 L1741.2,664.8 L1739.4,688.4 L1737.6,713.7 L1739.4,731.8 L1750.3,753.5 L1762.9,778.8 L1770.2,793.3" fill="none" stroke="#8b8b8b" stroke-width="1.3" stroke-linejoin="round" stroke-linecap="round" />
<path d="M1737.6,711.9 L1721.3,713.7 L1697.8,722.7" fill="none" stroke="#8b8b8b" stroke-width="1.3" stroke-linejoin="round" stroke-linecap="round" />
<path d="M1620.0,706.4 L1630.9,711.9 L1645.3,719.1 L1663.4,715.5 L1685.1,720.9 L1706.9,739.0 L1724.9,757.1 L1743.0,769.8 L1757.5,778.8 L1770.2,793.3 L1779.2,804.2 L1791.9,807.8 L1822.7,808.5 L1851.6,809.6 L1873.3,815.0 L1895.0,818.6 L1909.5,816.8 L1940.3,817.9" fill="none" stroke="#8b8b8b" stroke-width="3.0" stroke-linejoin="round" stroke-linecap="round" />
<path d="M1940.3,817.9 L1942.1,793.3 L1958.4,771.6 L1978.3,752.4" fill="none" stroke="#8b8b8b" stroke-width="2.2" stroke-linejoin="round" stroke-linecap="round" />
<path d="M1978.3,752.4 L2018.1,752.4 L2126.6,752.4 L2170.1,757.1 L2220.0,759.6" fill="none" stroke="#8b8b8b" stroke-width="2.2" stroke-linejoin="round" stroke-linecap="round" />
<path d="M1791.9,807.8 L1793.0,822.2 L1800.9,836.0" fill="none" stroke="#8b8b8b" stroke-width="3.0" stroke-linejoin="round" stroke-linecap="round" />
<path d="M1913.1,695.6 L1938.5,699.2 L1972.8,699.2 L1972.8,746.3 L1978.3,752.4" fill="none" stroke="#8b8b8b" stroke-width="1.3" stroke-linejoin="round" stroke-linecap="round" />
<path d="M2048.8,236.0 L2043.4,250.5 L2018.1,268.6 L2009.0,283.0 L2014.5,301.1 L2025.3,312.0 L2021.7,342.8 L1996.4,340.9 L1960.2,362.7 L1963.8,388.0 L1967.4,406.1 L1954.7,427.8 L1945.7,445.9 L1938.5,467.6 L1909.5,482.1 L1887.8,485.7 L1873.3,503.8 L1869.7,536.4 L1851.6,576.2 L1848.0,601.5 L1851.6,616.0" fill="none" stroke="#8b8b8b" stroke-width="1.3" stroke-linejoin="round" stroke-linecap="round" />
<path d="M2119.4,728.2 L2137.5,739.0 L2139.3,749.9 L2141.1,752.4" fill="none" stroke="#8b8b8b" stroke-width="1.3" stroke-linejoin="round" stroke-linecap="round" />
<path d="M2213.5,514.6 L2220.0,511.0" fill="none" stroke="#8b8b8b" stroke-width="1.3" stroke-linejoin="round" stroke-linecap="round" />
<path d="M2132.0,752.4 L2175.4,758.9 L2222.5,759.6 L2287.6,758.9 L2305.7,754.2 L2329.2,749.1 L2349.1,749.1 L2381.7,748.1" fill="none" stroke="#8b8b8b" stroke-width="2.2" stroke-linejoin="round" stroke-linecap="round" />
<path d="M2381.7,748.1 L2421.5,706.4 L2457.7,690.2 L2481.2,672.1 L2504.7,659.4 L2530.1,630.5 L2566.3,590.6 L2602.4,554.5 L2624.2,540.0 L2638.6,534.6 L2645.9,525.5 L2660.3,518.3 L2685.7,518.3 L2711.0,521.9 L2732.0,523.7" fill="none" stroke="#8b8b8b" stroke-width="3.0" stroke-linejoin="round" stroke-linecap="round" />
<path d="M2381.7,748.1 L2372.7,753.5 L2370.8,768.0 L2349.1,786.1 L2329.2,807.8 L2316.6,836.0" fill="none" stroke="#8b8b8b" stroke-width="3.0" stroke-linejoin="round" stroke-linecap="round" />
<path d="M2215.2,512.8 L2269.5,485.0 L2285.8,482.8 L2302.1,485.7 L2332.8,483.2 L2349.1,485.7 L2354.6,492.9 L2399.8,532.0 L2425.1,532.0 L2441.4,527.3" fill="none" stroke="#8b8b8b" stroke-width="1.3" stroke-linejoin="round" stroke-linecap="round" />
<path d="M2448.6,526.6 L2497.5,526.2 L2521.0,521.2 L2544.5,532.0 L2598.8,532.0" fill="none" stroke="#8b8b8b" stroke-width="1.3" stroke-linejoin="round" stroke-linecap="round" />
<path d="M2531.9,236.0 L2535.5,250.5 L2562.6,266.8 L2564.4,301.1 L2569.9,321.0 L2580.7,328.3 L2602.4,384.4 L2616.9,391.6 L2642.3,427.8 L2649.5,467.6 L2651.3,474.8 L2660.3,482.1 L2663.2,511.0" fill="none" stroke="#8b8b8b" stroke-width="1.3" stroke-linejoin="round" stroke-linecap="round" />
<path d="M2651.3,474.8 L2660.3,476.7" fill="none" stroke="#8b8b8b" stroke-width="2.2" stroke-linejoin="round" stroke-linecap="round" />
<path d="M2732.0,322.9 L2711.0,333.7 L2689.3,344.6 L2673.0,345.3 L2666.9,359.0 L2665.8,431.4 L2664.0,460.4 L2660.3,476.7 L2663.2,489.3 L2663.2,511.0" fill="none" stroke="#8b8b8b" stroke-width="1.3" stroke-linejoin="round" stroke-linecap="round" />
<path d="M2645.9,540.0 L2651.3,561.7 L2653.1,597.9 L2654.9,634.1 L2656.7,670.3 L2663.2,677.5 L2660.3,692.0 L2664.0,702.8 L2658.5,720.9 L2656.7,742.6 L2658.5,764.3 L2667.6,789.7 L2673.0,806.0 L2667.6,822.2 L2665.8,836.0" fill="none" stroke="#8b8b8b" stroke-width="2.2" stroke-linejoin="round" stroke-linecap="round" />
<path d="M2132.0,737.2 L2137.4,739.0 L2139.2,751.7" fill="none" stroke="#8b8b8b" stroke-width="1.3" stroke-linejoin="round" stroke-linecap="round" />
<path d="M1115.9,836.0 L1101.4,872.2 L1110.5,908.4 L1112.3,930.1 L1135.8,969.9 L1137.6,1002.5 L1128.6,1045.9 L1130.4,1082.1 L1135.8,1107.4 L1128.6,1136.4 L1135.8,1161.7 L1143.0,1183.4 L1164.8,1223.2 L1179.2,1252.2 L1193.7,1284.7 L1199.1,1317.3 L1197.3,1335.4 L1200.9,1353.5 L1208.2,1368.0 L1219.0,1389.7 L1220.8,1415.0 L1222.7,1436.0" fill="none" stroke="#8b8b8b" stroke-width="3.0" stroke-linejoin="round" stroke-linecap="round" />
<path d="M1137.6,977.9 L1208.2,982.6 L1222.7,988.0 L1229.9,982.6 L1255.2,980.8 L1280.6,977.9 L1305.9,986.2 L1327.6,992.3 L1345.7,988.0 L1381.9,980.8 L1443.4,981.8 L1468.7,959.0 L1486.8,933.7 L1499.5,918.5 L1508.5,926.5 L1526.6,933.7 L1533.9,944.6 L1555.6,939.1 L1584.5,937.3 L1620.0,933.7" fill="none" stroke="#8b8b8b" stroke-width="1.3" stroke-linejoin="round" stroke-linecap="round" />
<path d="M1020.0,1150.8 L1045.3,1154.5 L1063.4,1158.1 L1092.4,1156.3 L1106.9,1154.5" fill="none" stroke="#8b8b8b" stroke-width="1.3" stroke-linejoin="round" stroke-linecap="round" />
<path d="M1020.0,1292.0 L1034.5,1306.4 L1063.4,1335.4 L1092.4,1357.1 L1128.6,1371.6 L1161.1,1389.7 L1172.0,1400.5 L1175.6,1429.5" fill="none" stroke="#8b8b8b" stroke-width="2.2" stroke-linejoin="round" stroke-linecap="round" />
<path d="M1067.0,1436.0 L1065.2,1415.0 L1074.3,1378.8 L1092.4,1360.7" fill="none" stroke="#8b8b8b" stroke-width="1.3" stroke-linejoin="round" stroke-linecap="round" />
<path d="M1139.4,1197.9 L1150.3,1234.1 L1139.4,1263.0 L1139.4,1302.8 L1161.1,1342.6" fill="none" stroke="#8b8b8b" stroke-width="1.3" stroke-linejoin="round" stroke-linecap="round" />
<path d="M1146.7,1263.0 L1162.9,1241.3 L1139.4,1197.9" fill="none" stroke="#8b8b8b" stroke-width="0.1" stroke-linejoin="round" stroke-linecap="round" />
<path d="M1197.3,1284.7 L1228.1,1284.0 L1227.0,1331.8 L1220.8,1342.6 L1222.7,1364.3 L1223.4,1400.5 L1220.8,1436.0" fill="none" stroke="#8b8b8b" stroke-width="1.3" stroke-linejoin="round" stroke-linecap="round" />
<path d="M1197.3,1335.4 L1215.4,1317.3 L1227.0,1331.8" fill="none" stroke="#8b8b8b" stroke-width="1.3" stroke-linejoin="round" stroke-linecap="round" />
<path d="M1222.7,1364.3 L1244.4,1371.6 L1273.3,1379.5 L1295.0,1382.4 L1316.7,1378.8 L1338.5,1369.8 L1360.2,1357.1 L1381.9,1344.4 L1403.6,1328.2 L1418.1,1319.1 L1436.2,1315.5 L1454.3,1316.6 L1483.2,1311.9 L1504.9,1308.3 L1526.6,1317.3 L1544.7,1324.5 L1570.1,1326.3 L1588.2,1340.8 L1599.0,1353.5 L1620.0,1353.5" fill="none" stroke="#8b8b8b" stroke-width="2.2" stroke-linejoin="round" stroke-linecap="round" />
<path d="M1266.1,1378.8 L1266.1,1400.5 L1280.6,1422.2 L1309.5,1436.0" fill="none" stroke="#8b8b8b" stroke-width="1.3" stroke-linejoin="round" stroke-linecap="round" />
<path d="M1161.1,1389.7 L1164.8,1415.0 L1162.9,1436.0" fill="none" stroke="#8b8b8b" stroke-width="1.3" stroke-linejoin="round" stroke-linecap="round" />
<path d="M1172.0,1400.5 L1193.7,1407.8 L1220.8,1415.0" fill="none" stroke="#8b8b8b" stroke-width="1.3" stroke-linejoin="round" stroke-linecap="round" />
<path d="M1220.8,1415.0 L1244.4,1415.0 L1266.1,1400.5" fill="none" stroke="#8b8b8b" stroke-width="1.3" stroke-linejoin="round" stroke-linecap="round" />
<path d="M1808.2,836.0 L1826.3,850.5 L1835.3,872.2 L1826.3,901.1 L1804.6,919.2 L1793.7,937.3 L1800.9,959.0 L1800.9,984.4 L1822.7,1006.1 L1837.1,1024.2 L1866.1,1042.3 L1880.6,1056.7 L1909.5,1064.0 L1938.5,1073.0 L1967.4,1094.7 L1989.1,1105.6 L2005.4,1111.0 L2018.1,1105.6 L2054.3,1089.3 L2083.2,1094.7 L2104.9,1089.3 L2126.6,1092.9 L2144.7,1096.6 L2162.8,1103.8 L2177.3,1105.6" fill="none" stroke="#8b8b8b" stroke-width="2.2" stroke-linejoin="round" stroke-linecap="round" />
<path d="M1620.0,931.9 L1641.7,926.5 L1663.4,922.9 L1685.1,913.8 L1714.1,897.5 L1739.4,906.6 L1757.5,922.9 L1779.2,940.9 L1793.7,939.1" fill="none" stroke="#8b8b8b" stroke-width="1.3" stroke-linejoin="round" stroke-linecap="round" />
<path d="M1800.9,984.4 L1815.4,1009.7 L1842.6,1044.1 L1844.4,1067.6 L1822.7,1085.7 L1808.2,1107.4 L1793.7,1136.4 L1779.2,1161.7 L1772.0,1179.8 L1753.9,1194.3 L1750.3,1226.8 L1735.8,1237.7 L1717.7,1259.4 L1706.9,1284.7 L1705.0,1302.8 L1708.7,1317.3 L1701.4,1324.5" fill="none" stroke="#8b8b8b" stroke-width="1.3" stroke-linejoin="round" stroke-linecap="round" />
<path d="M1620.0,1349.9 L1641.7,1337.2 L1667.0,1335.4 L1681.5,1337.2 L1701.4,1324.5 L1724.9,1313.7 L1750.3,1301.0 L1764.8,1299.2 L1779.2,1306.4 L1793.7,1315.5 L1822.7,1317.3 L1851.6,1310.1 L1873.3,1304.6 L1887.8,1295.6 L1909.5,1284.7 L1931.2,1275.7 L1963.8,1266.6 L1996.4,1262.3 L2021.7,1260.1" fill="none" stroke="#8b8b8b" stroke-width="2.2" stroke-linejoin="round" stroke-linecap="round" />
<path d="M2021.7,1260.1 L2054.3,1268.4 L2101.3,1279.3 L2152.0,1290.2 L2188.2,1301.0 L2220.0,1313.7" fill="none" stroke="#8b8b8b" stroke-width="2.2" stroke-linejoin="round" stroke-linecap="round" />
<path d="M2153.8,1125.5 L2152.0,1154.5 L2144.7,1183.4 L2133.9,1197.9 L2117.6,1205.1 L2115.8,1226.8 L2112.2,1248.5 L2103.1,1270.3 L2101.3,1277.5" fill="none" stroke="#8b8b8b" stroke-width="2.2" stroke-linejoin="round" stroke-linecap="round" />
<path d="M2108.5,1100.2 L2117.6,1114.6 L2141.1,1121.9 L2153.8,1127.3 L2164.6,1114.6 L2173.7,1105.6" fill="none" stroke="#8b8b8b" stroke-width="2.2" stroke-linejoin="round" stroke-linecap="round" />
<path d="M2220.0,959.0 L2209.9,973.5 L2202.6,998.8 L2199.0,1024.2 L2188.2,1045.9 L2182.7,1067.6 L2184.5,1096.6" fill="none" stroke="#8b8b8b" stroke-width="2.2" stroke-linejoin="round" stroke-linecap="round" />
<path d="M2119.4,1228.6 L2162.8,1234.1 L2199.0,1226.8 L2220.0,1219.6" fill="none" stroke="#8b8b8b" stroke-width="1.3" stroke-linejoin="round" stroke-linecap="round" />
<path d="M2124.8,1230.5 L2130.3,1255.8 L2144.7,1273.9 L2153.8,1290.2" fill="none" stroke="#8b8b8b" stroke-width="1.3" stroke-linejoin="round" stroke-linecap="round" />
<path d="M1701.4,1324.5 L1710.5,1342.6 L1732.2,1360.7 L1741.2,1378.8 L1743.0,1400.5 L1728.6,1422.2 L1717.7,1436.0" fill="none" stroke="#8b8b8b" stroke-width="1.3" stroke-linejoin="round" stroke-linecap="round" />
<path d="M2316.6,836.0 L2309.3,854.1 L2287.6,872.2 L2262.3,893.9 L2255.0,915.6 L2240.6,937.3 L2218.9,959.0 L2204.4,988.0 L2193.5,1024.2 L2184.5,1053.1 L2182.7,1082.1 L2186.3,1096.6" fill="none" stroke="#8b8b8b" stroke-width="2.2" stroke-linejoin="round" stroke-linecap="round" />
<path d="M2132.0,1096.6 L2153.7,1105.6 L2171.8,1103.8 L2186.3,1096.6" fill="none" stroke="#8b8b8b" stroke-width="2.2" stroke-linejoin="round" stroke-linecap="round" />
<path d="M2153.7,1125.5 L2148.3,1154.5 L2146.5,1190.6 L2132.0,1197.9" fill="none" stroke="#8b8b8b" stroke-width="2.2" stroke-linejoin="round" stroke-linecap="round" />
<path d="M2132.0,1118.3 L2153.7,1125.5 L2164.6,1111.0" fill="none" stroke="#8b8b8b" stroke-width="2.2" stroke-linejoin="round" stroke-linecap="round" />
<path d="M2132.0,1284.7 L2168.2,1295.6 L2204.4,1310.1 L2251.4,1326.3 L2287.6,1337.2 L2302.1,1346.3 L2312.9,1357.1 L2334.7,1355.3 L2349.1,1358.9 L2360.0,1371.6 L2367.2,1393.3 L2381.7,1415.0 L2392.6,1436.0" fill="none" stroke="#8b8b8b" stroke-width="3.0" stroke-linejoin="round" stroke-linecap="round" />
<path d="M2233.3,1174.4 L2258.7,1167.1 L2287.6,1174.4 L2312.9,1174.4 L2334.7,1172.6 L2385.3,1179.8 L2417.9,1150.8 L2446.8,1132.7 L2443.2,1089.3 L2472.2,1078.5 L2490.3,1067.6 L2502.9,1038.7 L2497.5,1009.7 L2493.9,993.4 L2517.4,977.9 L2540.9,991.6 L2559.0,1006.1 L2577.1,1009.7 L2602.4,1006.1 L2631.4,1013.3 L2645.9,1020.6 L2674.8,1024.2 L2696.5,1033.2 L2711.0,1031.4" fill="none" stroke="#8b8b8b" stroke-width="1.3" stroke-linejoin="round" stroke-linecap="round" />
<path d="M2379.9,1183.4 L2378.1,1226.8 L2370.8,1252.2 L2341.9,1277.5 L2312.9,1302.8 L2296.7,1313.7 L2296.7,1337.2" fill="none" stroke="#8b8b8b" stroke-width="1.3" stroke-linejoin="round" stroke-linecap="round" />
<path d="M2662.2,836.0 L2671.2,861.3 L2685.7,886.7 L2700.2,908.4 L2711.0,944.6 L2721.9,962.7 L2732.0,969.9" fill="none" stroke="#8b8b8b" stroke-width="2.2" stroke-linejoin="round" stroke-linecap="round" />
<path d="M2132.0,1230.5 L2153.7,1232.3 L2179.0,1234.1" fill="none" stroke="#8b8b8b" stroke-width="1.3" stroke-linejoin="round" stroke-linecap="round" />
<path d="M2132.0,1266.6 L2146.5,1281.1 L2151.9,1288.4" fill="none" stroke="#8b8b8b" stroke-width="1.3" stroke-linejoin="round" stroke-linecap="round" />
<path d="M1173.2,1436.0 L1167.6,1458.1 L1162.1,1484.0 L1141.8,1520.9 L1116.0,1554.1 L1103.1,1591.0 L1104.9,1613.2 L1099.4,1642.7 L1092.0,1675.9 L1088.3,1712.8 L1086.4,1768.2 L1086.4,1842.0 L1086.4,1897.4 L1090.1,1923.2 L1090.1,1949.1 L1099.4,1978.6 L1099.4,2011.8 L1093.8,2048.0" fill="none" stroke="#8b8b8b" stroke-width="3.0" stroke-linejoin="round" stroke-linecap="round" />
<path d="M1045.8,1515.4 L1045.8,1583.6 L1040.3,1642.7 L1042.1,1694.4 L1047.7,1731.3" fill="none" stroke="#8b8b8b" stroke-width="1.3" stroke-linejoin="round" stroke-linecap="round" />
<path d="M1071.7,1746.1 L1073.5,1849.4 L1056.9,1875.3 L1047.7,1888.2 L1047.7,1941.7 L1056.9,1941.7 L1088.3,1943.5" fill="none" stroke="#8b8b8b" stroke-width="1.3" stroke-linejoin="round" stroke-linecap="round" />
<path d="M1020.0,1849.4 L1034.8,1867.9 L1047.7,1888.2" fill="none" stroke="#8b8b8b" stroke-width="1.3" stroke-linejoin="round" stroke-linecap="round" />
<path d="M1108.6,1624.3 L1130.7,1642.7 L1160.3,1661.2 L1195.3,1674.1 L1211.9,1672.2 L1237.8,1685.2 L1278.4,1685.2 L1300.5,1688.8 L1315.3,1701.8 L1337.4,1692.5 L1367.0,1711.0 L1385.4,1711.0 L1396.5,1731.3 L1385.4,1753.4 L1379.9,1768.2 L1379.9,1790.4 L1389.1,1808.8 L1415.0,1814.3 L1459.3,1813.2 L1481.4,1834.6 L1503.5,1866.0 L1544.1,1864.2 L1584.8,1873.4 L1610.6,1874.1 L1632.0,1877.1" fill="none" stroke="#8b8b8b" stroke-width="1.3" stroke-linejoin="round" stroke-linecap="round" />
<path d="M1383.6,1799.6 L1379.9,1812.5 L1379.9,1842.0 L1370.7,1864.2 L1365.1,1890.0 L1368.8,1902.9 L1337.4,1908.5 L1278.4,1919.5 L1259.9,1934.3 L1245.2,1926.9 L1215.6,1921.4 L1197.2,1934.3 L1167.6,1949.1 L1145.5,1958.3 L1123.4,1960.1" fill="none" stroke="#8b8b8b" stroke-width="1.3" stroke-linejoin="round" stroke-linecap="round" />
<path d="M1311.6,1436.0 L1333.8,1445.2 L1367.0,1443.4 L1392.8,1452.6 L1415.0,1471.1 L1451.9,1472.9 L1459.3,1484.0 L1462.9,1502.4 L1474.0,1528.3 L1499.9,1546.7 L1514.6,1572.6 L1529.4,1609.5 L1544.1,1646.4 L1566.3,1668.5 L1588.4,1683.3 L1592.1,1694.4 L1610.6,1701.8 L1619.8,1723.9" fill="none" stroke="#8b8b8b" stroke-width="1.3" stroke-linejoin="round" stroke-linecap="round" />
<path d="M1632.0,1709.1 L1619.8,1727.6 L1606.9,1768.2 L1601.4,1805.1 L1606.9,1842.0 L1610.6,1874.1 L1592.1,1904.8 L1573.7,1941.7 L1566.3,1971.2 L1558.9,2004.4 L1551.5,2026.6 L1536.8,2048.0" fill="none" stroke="#8b8b8b" stroke-width="1.3" stroke-linejoin="round" stroke-linecap="round" />
<path d="M1503.5,1866.0 L1536.8,1893.7 L1558.9,1915.9 L1573.7,1941.7" fill="none" stroke="#8b8b8b" stroke-width="1.3" stroke-linejoin="round" stroke-linecap="round" />
<path d="M1573.7,1941.7 L1595.8,1956.5 L1618.0,1967.5 L1632.0,1989.7" fill="none" stroke="#8b8b8b" stroke-width="1.3" stroke-linejoin="round" stroke-linecap="round" />
<path d="M1099.4,1978.6 L1130.7,1997.1 L1167.6,2011.8 L1193.5,2030.3 L1211.9,2048.0" fill="none" stroke="#8b8b8b" stroke-width="1.3" stroke-linejoin="round" stroke-linecap="round" />
<path d="M1020.0,1603.9 L1038.5,1616.9 L1060.6,1616.9" fill="none" stroke="#8b8b8b" stroke-width="1.3" stroke-linejoin="round" stroke-linecap="round" />
<path d="M1060.6,1762.7 L1086.4,1762.7" fill="none" stroke="#8b8b8b" stroke-width="1.3" stroke-linejoin="round" stroke-linecap="round" />
<path d="M1020.0,1537.5 L1042.1,1515.4 L1068.0,1509.8 L1093.8,1491.4 L1108.6,1480.3" fill="none" stroke="#8b8b8b" stroke-width="1.3" stroke-linejoin="round" stroke-linecap="round" />
<path d="M1117.8,1471.1 L1117.8,1491.4 L1130.7,1498.8 L1154.7,1500.6" fill="none" stroke="#8b8b8b" stroke-width="1.3" stroke-linejoin="round" stroke-linecap="round" />
<path d="M1108.6,1480.3 L1117.8,1471.1 L1141.8,1465.5 L1167.6,1458.1" fill="none" stroke="#8b8b8b" stroke-width="1.3" stroke-linejoin="round" stroke-linecap="round" />
<path d="M1173.2,1443.4 L1193.5,1445.2 L1204.6,1452.6 L1217.5,1443.4 L1221.2,1460.0" fill="none" stroke="#8b8b8b" stroke-width="2.2" stroke-linejoin="round" stroke-linecap="round" />
<path d="M1056.9,1436.0 L1051.4,1458.1 L1056.9,1480.3 L1053.2,1502.4 L1045.8,1515.4" fill="none" stroke="#8b8b8b" stroke-width="1.3" stroke-linejoin="round" stroke-linecap="round" />
<path d="M1108.6,1624.3 L1103.1,1591.0" fill="none" stroke="#8b8b8b" stroke-width="2.2" stroke-linejoin="round" stroke-linecap="round" />
<path d="M1714.4,1436.0 L1718.1,1454.5 L1727.3,1476.6 L1740.3,1509.8 L1745.8,1554.1 L1742.1,1574.4 L1725.5,1587.3 L1696.0,1594.7 L1672.0,1618.7 L1675.7,1657.5 L1666.4,1679.6 L1655.4,1681.5 L1620.3,1729.4 L1607.4,1768.2 L1601.8,1805.1 L1605.5,1842.0 L1609.2,1864.2 L1609.2,1873.4" fill="none" stroke="#8b8b8b" stroke-width="1.3" stroke-linejoin="round" stroke-linecap="round" />
<path d="M1600.0,1699.9 L1607.4,1699.9 L1620.3,1729.4" fill="none" stroke="#8b8b8b" stroke-width="1.3" stroke-linejoin="round" stroke-linecap="round" />
<path d="M1609.2,1873.4 L1644.3,1882.6 L1670.1,1882.6 L1694.1,1862.3" fill="none" stroke="#8b8b8b" stroke-width="1.3" stroke-linejoin="round" stroke-linecap="round" />
<path d="M1600.0,1952.8 L1614.8,1963.8 L1629.5,1982.3 L1648.0,2011.8 L1673.8,2022.9 L1710.7,2030.3 L1762.4,2048.0" fill="none" stroke="#8b8b8b" stroke-width="1.3" stroke-linejoin="round" stroke-linecap="round" />
<path d="M1609.2,1873.4 L1600.0,1890.0" fill="none" stroke="#8b8b8b" stroke-width="1.3" stroke-linejoin="round" stroke-linecap="round" />
<path d="M2395.0,1436.0 L2415.3,1452.6 L2433.8,1452.6 L2463.3,1456.3 L2474.4,1472.9 L2481.7,1502.4 L2479.9,1508.0 L2494.7,1524.6 L2507.6,1583.6 L2535.3,1624.3 L2539.0,1687.0 L2548.2,1698.1 L2581.4,1714.7 L2614.6,1731.3 L2629.4,1742.4 L2647.8,1768.2 L2658.9,1779.3 L2670.0,1801.4 L2677.4,1823.6 L2684.8,1849.4 L2699.5,1864.2 L2714.3,1878.9 L2725.4,1908.5 L2732.0,1919.5" fill="none" stroke="#8b8b8b" stroke-width="2.2" stroke-linejoin="round" stroke-linecap="round" />
<path d="M2583.2,2048.0 L2596.2,2034.0 L2610.9,2024.7 L2636.8,2019.2 L2658.9,2002.6 L2673.7,2000.8 L2692.1,1986.0 L2732.0,1985.2" fill="none" stroke="#8b8b8b" stroke-width="1.3" stroke-linejoin="round" stroke-linecap="round" />
<text x="1286.7" y="402.5" font-family="Liberation Sans, sans-serif" font-size="22" fill="#000" stroke="#fff" stroke-opacity="0.85" stroke-width="6.5" stroke-linejoin="round" paint-order="stroke" text-anchor="start">Everett</text>
<text x="1255.3" y="557.4" font-family="Liberation Sans, sans-serif" font-size="22" fill="#000" stroke="#fff" stroke-opacity="0.85" stroke-width="6.5" stroke-linejoin="round" paint-order="stroke" text-anchor="start">Seattle</text>
<text x="1155.7" y="572.6" font-family="Liberation Sans, sans-serif" font-size="22" fill="#000" stroke="#fff" stroke-opacity="0.85" stroke-width="6.5" stroke-linejoin="round" paint-order="stroke" text-anchor="start">Bremerton</text>
<text x="1221.6" y="702.9" font-family="Liberation Sans, sans-serif" font-size="22" fill="#000" stroke="#fff" stroke-opacity="0.85" stroke-width="6.5" stroke-linejoin="round" paint-order="stroke" text-anchor="start">Tacoma</text>
<text x="1092.4" y="784.3" font-family="Liberation Sans, sans-serif" font-size="22" fill="#000" stroke="#fff" stroke-opacity="0.85" stroke-width="6.5" stroke-linejoin="round" paint-order="stroke" text-anchor="start">Olympia</text>
<text x="1793.0" y="629.8" font-family="Liberation Sans, sans-serif" font-size="22" fill="#000" stroke="#fff" stroke-opacity="0.85" stroke-width="6.5" stroke-linejoin="round" paint-order="stroke" text-anchor="start">Wenatchee</text>
<text x="2602.5" y="534.6" font-family="Liberation Sans, sans-serif" font-size="22" fill="#000" stroke="#fff" stroke-opacity="0.85" stroke-width="6.5" stroke-linejoin="round" paint-order="stroke" text-anchor="start">Spokane</text>
<text x="1756.8" y="963.4" font-family="Liberation Sans, sans-serif" font-size="22" fill="#000" stroke="#fff" stroke-opacity="0.85" stroke-width="6.5" stroke-linejoin="round" paint-order="stroke" text-anchor="start">Yakima</text>
<text x="2090.5" y="1091.2" font-family="Liberation Sans, sans-serif" font-size="22" fill="#000" stroke="#fff" stroke-opacity="0.85" stroke-width="6.5" stroke-linejoin="round" paint-order="stroke" text-anchor="start">Richland</text>
<text x="2335.8" y="1178.0" font-family="Liberation Sans, sans-serif" font-size="22" fill="#000" stroke="#fff" stroke-opacity="0.85" stroke-width="6.5" stroke-linejoin="round" paint-order="stroke" text-anchor="start">Walla Walla</text>
<text x="2713.6" y="1036.9" font-family="Liberation Sans, sans-serif" font-size="22" fill="#000" stroke="#fff" stroke-opacity="0.85" stroke-width="6.5" stroke-linejoin="round" paint-order="stroke" text-anchor="start">Lewiston</text>
<text x="1141.2" y="1350.7" font-family="Liberation Sans, sans-serif" font-size="22" fill="#000" stroke="#fff" stroke-opacity="0.85" stroke-width="6.5" stroke-linejoin="round" paint-order="stroke" text-anchor="start">Vancouver</text>
<text x="1153.2" y="1394.0" font-family="Liberation Sans, sans-serif" font-size="22" fill="#000" stroke="#fff" stroke-opacity="0.85" stroke-width="6.5" stroke-linejoin="round" paint-order="stroke" text-anchor="start">Portland</text>
<text x="1063.6" y="1623.2" font-family="Liberation Sans, sans-serif" font-size="22" fill="#000" stroke="#fff" stroke-opacity="0.85" stroke-width="6.5" stroke-linejoin="round" paint-order="stroke" text-anchor="start">Salem</text>
<text x="1040.3" y="1740.5" font-family="Liberation Sans, sans-serif" font-size="22" fill="#000" stroke="#fff" stroke-opacity="0.85" stroke-width="6.5" stroke-linejoin="round" paint-order="stroke" text-anchor="start">Albany</text>
<text x="1040.3" y="1966.5" font-family="Liberation Sans, sans-serif" font-size="22" fill="#000" stroke="#fff" stroke-opacity="0.85" stroke-width="6.5" stroke-linejoin="round" paint-order="stroke" text-anchor="start">Eugene</text>
<text x="1543.4" y="1963.0" font-family="Liberation Sans, sans-serif" font-size="22" fill="#000" stroke="#fff" stroke-opacity="0.85" stroke-width="6.5" stroke-linejoin="round" paint-order="stroke" text-anchor="start">Bend</text>
<text x="1071.0" y="1768.2" font-family="Liberation Sans, sans-serif" font-size="22" fill="#000" stroke="#fff" stroke-opacity="0.85" stroke-width="6.5" stroke-linejoin="round" paint-order="stroke" text-anchor="end">Corvallis</text>
<path d="M1108.0,1145.0 L1123.1,1154.0 L1103.2,1167.3Z" fill="#8a8a8a" stroke="#000" stroke-width="1.6" stroke-linejoin="miter" fill-opacity="1"/>
<path d="M1109.8,1139.0 L1099.0,1169.1" fill="none" stroke="#000" stroke-width="2.8" stroke-linejoin="round" stroke-linecap="round" stroke-linecap="butt"/>
<path d="M1106.2,1156.4 L1141.8,1155.6 L1133.3,1178.2Z" fill="#ffa400" stroke="#000" stroke-width="1.6" stroke-linejoin="miter" fill-opacity="1"/>
<path d="M1137.6,1230.6 L1168.9,1219.8" fill="none" stroke="#000" stroke-width="2.6" stroke-linejoin="round" stroke-linecap="round" stroke-linecap="butt"/>
<path d="M1154.4,1221.0 L1153.2,1227.6" fill="none" stroke="#000" stroke-width="1.2" stroke-linejoin="round" stroke-linecap="round" />
<path d="M1152.6,1226.4 L1174.9,1254.8 L1152.6,1263.2Z" fill="#ffa400" stroke="#000" stroke-width="1.6" stroke-linejoin="miter" fill-opacity="1"/>
<circle cx="1158.7" cy="1237.9" r="5" fill="#0d0a06"/>
<g transform="translate(1130.8,1252.5) rotate(73.5)" font-family="Liberation Sans, sans-serif" font-weight="bold" font-size="24" fill="#333" stroke="#fff" stroke-opacity="0.75" stroke-width="3.2" stroke-linejoin="round" paint-order="stroke" text-anchor="middle"><text x="0" y="8.6">Willamette</text><text x="0" y="40.1">8.9 kn</text></g>
<path d="M1162.5,1319.9 L1172.6,1320.9 L1167.3,1332.5Z" fill="#ffa400" stroke="#000" stroke-width="1.6" stroke-linejoin="miter" fill-opacity="1"/>
<path d="M1152.8,1340.2 L1165.4,1334.4 L1160.5,1348.9Z" fill="#ffa400" stroke="#000" stroke-width="1.6" stroke-linejoin="miter" fill-opacity="1"/>
<path d="M1175.0,1319.0 L1191.4,1335.4 L1161.5,1349.8Z" fill="#8a8a8a" stroke="#000" stroke-width="1.6" stroke-linejoin="miter" fill-opacity="1"/>
<path d="M1174.0,1313.6 L1196.2,1337.3" fill="none" stroke="#000" stroke-width="3.2" stroke-linejoin="round" stroke-linecap="round" stroke-linecap="butt"/>
<path d="M1162.5,1350.8 L1174.0,1345.0 L1167.3,1357.6Z" fill="#ffa400" stroke="#000" stroke-width="1.6" stroke-linejoin="miter" fill-opacity="1"/>
<path d="M1177.9,1344.0 L1191.4,1340.2 L1202.0,1352.7 L1189.5,1348.9Z" fill="#ffa400" stroke="#000" stroke-width="1.6" stroke-linejoin="miter" fill-opacity="1"/>
<circle cx="1172.6" cy="1337.3" r="4.8" fill="#0d0a06"/>
<circle cx="1186.6" cy="1343.6" r="4.4" fill="#2a1c05"/>
<path d="M1176.0,1351.8 L1199.1,1363.3 L1172.1,1382.6Z" fill="#ffa400" stroke="#000" stroke-width="2.0" stroke-linejoin="miter" fill-opacity="1"/>
<g transform="translate(1203.5,1382.5) rotate(-61.2)" font-family="Liberation Sans, sans-serif" font-weight="bold" font-size="24" fill="#333" stroke="#fff" stroke-opacity="0.75" stroke-width="3.2" stroke-linejoin="round" paint-order="stroke" text-anchor="middle"><text x="0" y="8.6">Lincoln</text></g>
<path d="M1540.7,1304.6 L1579.3,1309.4 L1545.5,1329.2Z" fill="#ffa400" stroke="#000" stroke-width="2.0" stroke-linejoin="miter" fill-opacity="1"/>
<circle cx="1563.8" cy="1313.8" r="4.8" fill="#0d0a06"/>
<g transform="translate(1565.8,1344.7) rotate(-10.6)" font-family="Liberation Sans, sans-serif" font-weight="bold" font-size="24" fill="#333" stroke="#fff" stroke-opacity="0.75" stroke-width="3.2" stroke-linejoin="round" paint-order="stroke" text-anchor="middle"><text x="0" y="8.6">Cascades</text><text x="0" y="37.6">7.2 kn</text></g>
<path d="M2216.6,1103.2 L2245.5,1083.9 L2250.8,1108.0Z" fill="#ffa400" stroke="#000" stroke-width="1.6" stroke-linejoin="miter" fill-opacity="1"/>
<path d="M2182.3,1120.1 L2209.8,1098.4 L2203.1,1133.1Z" fill="#ffa400" stroke="#000" stroke-width="1.8" stroke-linejoin="miter" fill-opacity="1"/>
<path d="M2197.3,1088.3 L2211.8,1097.9 L2217.6,1102.7" fill="none" stroke="#000" stroke-width="2.2" stroke-linejoin="round" stroke-linecap="round" stroke-linecap="butt"/>
<path d="M2209.3,1087.8 L2216.6,1119.1" fill="none" stroke="#000" stroke-width="2.4" stroke-linejoin="round" stroke-linecap="round" stroke-linecap="butt"/>
<circle cx="2227.2" cy="1098.9" r="5" fill="#0d0a06"/>
<g transform="translate(2226.5,1125.5) rotate(-57.7)" font-family="Liberation Sans, sans-serif" font-weight="bold" font-size="24" fill="#333" stroke="#fff" stroke-opacity="0.75" stroke-width="3.2" stroke-linejoin="round" paint-order="stroke" text-anchor="middle"><text x="0" y="8.6">Clearwater</text></g>
<path d="M2478.2,943.8 L2490.2,980.0 L2466.1,980.0Z" fill="#ffa400" stroke="#000" stroke-width="1.8" stroke-linejoin="miter" fill-opacity="1"/>
<g transform="translate(2452.0,962.5) rotate(90)" font-family="Liberation Sans, sans-serif" font-weight="bold" font-size="24" fill="#333" stroke="#fff" stroke-opacity="0.75" stroke-width="3.2" stroke-linejoin="round" paint-order="stroke" text-anchor="middle"><text x="0" y="8.6">STCO Office</text></g>
</svg>

<div class="abs" style="right:0;top:0;width:34px;height:1811px;background:linear-gradient(to right,rgba(40,32,0,0) 0%,rgba(40,32,0,0.03) 40%,rgba(40,32,0,0.09) 75%,rgba(40,32,0,0.17) 100%)"></div><div class="abs" style="left:0;top:0;width:14px;height:1811px;background:linear-gradient(to left,rgba(40,32,0,0) 0%,rgba(40,32,0,0.05) 50%,rgba(40,32,0,0.15) 100%)"></div><div class="abs" style="left:0;bottom:0;width:1710px;height:16px;background:linear-gradient(to bottom,rgba(40,32,0,0) 0%,rgba(40,32,0,0.05) 50%,rgba(40,32,0,0.17) 100%)"></div><div class="abs" style="left:0;top:0;width:1710px;height:14px;background:linear-gradient(to top,rgba(40,32,0,0) 0%,rgba(40,32,0,0.05) 50%,rgba(40,32,0,0.16) 100%)"></div><div class="abs" style="left:0;top:0;width:1710px;height:1px;background:rgba(0,0,0,0.45)"></div><div class="abs" style="left:607px;top:1668px;width:496px;height:94px;background:#b8ad8e"></div><div class="mb" style="left:617px;top:1678px;width:150px;height:74px"></div><div class="mb" style="left:787px;top:1678px;width:74px;height:74px"></div><div class="mb" style="left:865px;top:1678px;width:150px;height:74px"></div><div class="mb" style="left:1019px;top:1678px;width:74px;height:74px"></div><div class="t" style="left:653.29px;top:1688.30px;font-size:20.67px;color:#f2f2f2;transform:scaleX(1.0699);">CHART</div>
<div class="t" style="left:635.86px;top:1716.13px;font-size:25.84px;color:#fff;font-weight:bold;transform:scaleX(1.0568);-webkit-text-stroke:0.7px #fff;">VECTOR</div>
<div class="t" style="left:874.16px;top:1705.50px;font-size:20.67px;color:#f2f2f2;transform:scaleX(1.1884);">1:2,282,000</div>
<div class="abs" style="left:815px;top:1716.2px;width:18px;height:3px;background:#fff"></div><div class="abs" style="left:1047px;top:1716.5px;width:18px;height:3.2px;background:#fff"></div><div class="abs" style="left:1054.4px;top:1709px;width:3.2px;height:18px;background:#fff"></div><div class="abs" style="left:-1px;top:1785px;width:689px;height:11px;border-radius:5.5px;background:#000"></div>
</div>
<div class="abs" id="sidebar">
<div class="abs" id="sbtop"></div>
<div class="abs" id="hamb"></div>
<svg style="left:0;top:0" width="104" height="1811" viewBox="0 237 104 1811" fill="none" stroke="#f0f0f0" stroke-linecap="round" stroke-linejoin="round"><rect x="34" y="265" width="36.5" height="8" fill="#efefef" stroke="none"/><rect x="34" y="277" width="36.5" height="8" fill="#efefef" stroke="none"/><rect x="34" y="289" width="36.5" height="8" fill="#efefef" stroke="none"/><g stroke="none"><g transform="translate(52.0,368.9) rotate(15.6)"><circle r="22.59" fill="none" stroke="#f26b21" stroke-width="3.41"/><polygon points="0.00,-32.50 4.71,-4.71 32.50,-0.00 4.71,4.71 0.00,32.50 -4.71,4.71 -32.50,0.00 -4.71,-4.71" fill="#202020" stroke="#202020" stroke-width="2.34" stroke-linejoin="miter"/><polygon points="18.61,-18.61 5.13,-10.52 6.89,-6.89 10.52,-5.13" fill="#202020" stroke="#202020" stroke-width="2.34" stroke-linejoin="miter"/><polygon points="18.61,18.61 10.52,5.13 6.89,6.89 5.13,10.52" fill="#202020" stroke="#202020" stroke-width="2.34" stroke-linejoin="miter"/><polygon points="-18.61,18.61 -5.13,10.52 -6.89,6.89 -10.52,5.13" fill="#202020" stroke="#202020" stroke-width="2.34" stroke-linejoin="miter"/><polygon points="-18.61,-18.61 -10.52,-5.13 -6.89,-6.89 -5.13,-10.52" fill="#202020" stroke="#202020" stroke-width="2.34" stroke-linejoin="miter"/><polygon points="0.00,-32.50 4.71,-4.71 32.50,-0.00 4.71,4.71 0.00,32.50 -4.71,4.71 -32.50,0.00 -4.71,-4.71" fill="#f26b21"/><polygon points="18.61,-18.61 5.13,-10.52 6.89,-6.89 10.52,-5.13" fill="#f26b21"/><polygon points="18.61,18.61 10.52,5.13 6.89,6.89 5.13,10.52" fill="#f26b21"/><polygon points="-18.61,18.61 -5.13,10.52 -6.89,6.89 -10.52,5.13" fill="#f26b21"/><polygon points="-18.61,-18.61 -10.52,-5.13 -6.89,-6.89 -5.13,-10.52" fill="#f26b21"/><circle r="3.19" fill="#202020"/></g></g><path d="M51.1,458.0 L74.2,462.1 L54.9,479.4 L31.3,473.4 Z" stroke-width="3.1" fill="#202020" stroke-linejoin="miter"/><path d="M51.1,447.1 L74.2,451.2 L54.9,468.5 L31.3,462.5 Z" stroke-width="3.1" fill="#202020" stroke-linejoin="miter"/><path d="M51.1,436.2 L74.2,440.3 L54.9,457.6 L31.3,451.6 Z" stroke-width="3.1" fill="#202020" stroke-linejoin="miter"/><circle cx="51.6" cy="545" r="21.6" stroke-width="4.2"/><circle cx="51.5" cy="534" r="3" fill="#f0f0f0" stroke="none"/><path d="M47.5,543.5 h5.2 v13" stroke-width="3.4" stroke-linecap="butt" stroke-linejoin="miter"/><line x1="46" y1="556.5" x2="58.5" y2="556.5" stroke-width="3.4" stroke-linecap="butt"/><path d="M52,652.5 C51,644 40,636 40,626 a12,12 0 0 1 24,0 C64,636 53,644 52,652.5 Z M52,620.2 a5.2,5.2 0 1 0 0.01,0 Z" fill="#f0f0f0" stroke="none" fill-rule="evenodd"/><path d="M35.3,721 A9.3,9.3 0 0 1 50.3,712" stroke-width="3"/><line x1="31.9" y1="721.7" x2="27.8" y2="722.4" stroke-width="3.6" stroke-linecap="butt"/><line x1="32.5" y1="715.2" x2="28.5" y2="713.8" stroke-width="3.6" stroke-linecap="butt"/><line x1="36.2" y1="709.8" x2="33.5" y2="706.6" stroke-width="3.6" stroke-linecap="butt"/><line x1="42.1" y1="707.1" x2="41.4" y2="703.0" stroke-width="3.6" stroke-linecap="butt"/><line x1="48.6" y1="707.7" x2="50.0" y2="703.7" stroke-width="3.6" stroke-linecap="butt"/><line x1="54.0" y1="711.4" x2="57.2" y2="708.7" stroke-width="3.6" stroke-linecap="butt"/><path d="M39,739.7 H67.5 a7.2,7.2 0 0 0 1.5,-14.2 a10.5,10.5 0 0 0 -19.5,-3.6 a6.8,6.8 0 0 0 -8.6,4.2 a6.9,6.9 0 0 0 -1.9,13.6 Z" stroke-width="3.4" fill="#202020"/><path d="M52.8,791.5 L37.8,829 H67.8 Z" stroke-width="4.6"/><circle cx="60.6" cy="888.2" r="13.6" stroke-width="3.6"/><line x1="47.5" y1="903.5" x2="33.5" y2="915.5" stroke-width="10.5"/><path d="M48.0,967.0 L48.0,960.7 L56.0,960.7 L56.0,967.0 L61.9,969.5 L66.4,965.0 L72.0,970.6 L67.5,975.1 L70.0,981.0 L76.3,981.0 L76.3,989.0 L70.0,989.0 L67.5,994.9 L72.0,999.4 L66.4,1005.0 L61.9,1000.5 L56.0,1003.0 L56.0,1009.3 L48.0,1009.3 L48.0,1003.0 L42.1,1000.5 L37.6,1005.0 L32.0,999.4 L36.5,994.9 L34.0,989.0 L27.7,989.0 L27.7,981.0 L34.0,981.0 L36.5,975.1 L32.0,970.6 L37.6,965.0 L42.1,969.5 Z" fill="#f0f0f0" stroke="#f0f0f0" stroke-width="1.2" stroke-linejoin="round"/><circle cx="52" cy="985" r="11.2" fill="none" stroke="#202020" stroke-width="3.2"/><circle cx="52" cy="985" r="3.8" fill="#202020" stroke="none"/><clipPath id="cpg"><rect x="0" y="1780" width="104" height="219"/></clipPath><g clip-path="url(#cpg)" stroke="none"><g transform="translate(52.6,1922.4) rotate(15.85)"><circle r="91.39" fill="none" stroke="#a58c00" stroke-width="13.81"/><polygon points="0.00,-131.50 19.06,-19.06 131.50,-0.00 19.06,19.06 0.00,131.50 -19.06,19.06 -131.50,0.00 -19.06,-19.06" fill="#202020" stroke="#202020" stroke-width="9.47" stroke-linejoin="miter"/><polygon points="75.32,-75.32 20.75,-42.55 27.90,-27.90 42.55,-20.75" fill="#202020" stroke="#202020" stroke-width="9.47" stroke-linejoin="miter"/><polygon points="75.32,75.32 42.55,20.75 27.90,27.90 20.75,42.55" fill="#202020" stroke="#202020" stroke-width="9.47" stroke-linejoin="miter"/><polygon points="-75.32,75.32 -20.75,42.55 -27.90,27.90 -42.55,20.75" fill="#202020" stroke="#202020" stroke-width="9.47" stroke-linejoin="miter"/><polygon points="-75.32,-75.32 -42.55,-20.75 -27.90,-27.90 -20.75,-42.55" fill="#202020" stroke="#202020" stroke-width="9.47" stroke-linejoin="miter"/><polygon points="0.00,-131.50 19.06,-19.06 131.50,-0.00 19.06,19.06 0.00,131.50 -19.06,19.06 -131.50,0.00 -19.06,-19.06" fill="#a58c00"/><polygon points="75.32,-75.32 20.75,-42.55 27.90,-27.90 42.55,-20.75" fill="#a58c00"/><polygon points="75.32,75.32 42.55,20.75 27.90,27.90 20.75,42.55" fill="#a58c00"/><polygon points="-75.32,75.32 -20.75,42.55 -27.90,27.90 -42.55,20.75" fill="#a58c00"/><polygon points="-75.32,-75.32 -42.55,-20.75 -27.90,-27.90 -20.75,-42.55" fill="#a58c00"/><circle r="12.89" fill="#202020"/></g></g></svg>
</div>
<div class="abs" id="panel"></div>
<svg style="left:104px;top:237px" width="918" height="120" viewBox="104 237 918 120" fill="none" stroke="#fff" stroke-linecap="round" stroke-linejoin="round"><path d="M117.8,277 H150 M134,260.8 L117.8,277 L134,293.2" stroke-width="2.3"/><path d="M964,266.5 L985,288 M985,266.5 L964,288" stroke-width="2.3"/></svg><div class="t" style="left:163.24px;top:259.13px;font-size:38.83px;color:#fff;transform:scaleX(1.0490);-webkit-text-stroke:0.5px #fff;">Layers</div>
<div class="t" style="left:138.75px;top:357.58px;font-size:31.56px;color:#0a7aff;font-weight:bold;transform:scaleX(1.0967);-webkit-text-stroke:0.9px #0a7aff;">Layers</div>
<div class="t" style="left:280.33px;top:358.82px;font-size:31.28px;color:#0a7aff;transform:scaleX(1.1270);">Items</div>
<div class="t" style="left:397.53px;top:358.82px;font-size:31.28px;color:#0a7aff;transform:scaleX(1.1062);">Deleted</div>
<div class="btn" style="left:138px;top:432px;width:416px;height:72px"></div><div class="btn" style="left:590px;top:432px;width:380px;height:72px"></div><div class="t" style="left:258.76px;top:453.48px;font-size:31.56px;color:#f6f6f6;font-weight:bold;transform:scaleX(1.0936);-webkit-text-stroke:0.6px #f6f6f6;">New Layer</div>
<div class="t" style="left:704.23px;top:453.48px;font-size:31.56px;color:#f6f6f6;font-weight:bold;letter-spacing:1.5px;transform:scaleX(1.1077);-webkit-text-stroke:0.6px #f6f6f6;">Import...</div>
<div class="abs" style="left:136px;top:538px;width:836px;height:76px;border-radius:9px;background:#f26b22"></div><div class="t" style="left:198.13px;top:561.35px;font-size:31.01px;color:#fff;transform:scaleX(1.1018);-webkit-text-stroke:0.5px #fff;">Import Old-Style Fleet Background Layer File...</div>
<div class="abs" id="list"></div><div class="t" style="left:171.25px;top:671.40px;font-size:31.42px;color:#fff;transform:scaleX(1.0625);-webkit-text-stroke:0.55px #fff;">Above the Dalles</div>
<div class="t" style="left:170.33px;top:712.42px;font-size:20.53px;color:#9c9c9c;font-weight:bold;transform:scaleX(1.1147);">Old-Style</div>
<div class="t" style="left:294.07px;top:712.42px;font-size:20.53px;color:#9c9c9c;font-weight:bold;transform:scaleX(1.0751);">No Subscribers</div>
<div class="tg" style="top:677.3px"><i></i></div><div class="dv" style="top:754.5px"></div><div class="t" style="left:168.54px;top:779.25px;font-size:31.42px;color:#fff;transform:scaleX(1.0783);-webkit-text-stroke:0.55px #fff;">ECS Inbound Routes 8-27-25</div>
<div class="t" style="left:170.33px;top:820.27px;font-size:20.53px;color:#9c9c9c;font-weight:bold;transform:scaleX(1.1147);">Old-Style</div>
<div class="tg" style="top:785.1px"><i></i></div><div class="dv" style="top:862.4px"></div><div class="t" style="left:168.53px;top:887.10px;font-size:31.42px;color:#fff;transform:scaleX(1.0833);-webkit-text-stroke:0.55px #fff;">ECS Outbound Routes 8-27-25</div>
<div class="t" style="left:170.33px;top:928.12px;font-size:20.53px;color:#9c9c9c;font-weight:bold;transform:scaleX(1.1147);">Old-Style</div>
<div class="tg" style="top:893.0px"><i></i></div><div class="dv" style="top:970.2px"></div><div class="t" style="left:168.40px;top:994.95px;font-size:31.42px;color:#fff;transform:scaleX(1.0087);-webkit-text-stroke:0.55px #fff;">INBOUND ROUTES</div>
<div class="t" style="left:170.33px;top:1035.97px;font-size:20.53px;color:#9c9c9c;font-weight:bold;transform:scaleX(1.1147);">Old-Style</div>
<div class="tg" style="top:1000.8px"><i></i></div><div class="dv" style="top:1078.0px"></div><div class="t" style="left:169.71px;top:1102.80px;font-size:31.42px;color:#fff;transform:scaleX(1.0884);-webkit-text-stroke:0.55px #fff;">Ops Beyond Astoria-Megler Bridge</div>
<div class="t" style="left:170.33px;top:1143.82px;font-size:20.53px;color:#9c9c9c;font-weight:bold;transform:scaleX(1.1147);">Old-Style</div>
<div class="t" style="left:294.07px;top:1143.82px;font-size:20.53px;color:#9c9c9c;font-weight:bold;transform:scaleX(1.0751);">No Subscribers</div>
<div class="tg" style="top:1108.7px"><i></i></div><div class="dv" style="top:1185.9px"></div><div class="t" style="left:169.83px;top:1210.65px;font-size:31.42px;color:#fff;transform:scaleX(1.0062);-webkit-text-stroke:0.55px #fff;">OUTBOUND ROUTES</div>
<div class="t" style="left:170.33px;top:1251.67px;font-size:20.53px;color:#9c9c9c;font-weight:bold;transform:scaleX(1.1147);">Old-Style</div>
<div class="tg" style="top:1216.5px"><i></i></div><div class="dv" style="top:1293.8px"></div><div class="t" style="left:169.78px;top:1318.50px;font-size:31.42px;color:#fff;transform:scaleX(1.0380);-webkit-text-stroke:0.55px #fff;">Snake River</div>
<div class="t" style="left:170.33px;top:1359.52px;font-size:20.53px;color:#9c9c9c;font-weight:bold;transform:scaleX(1.1147);">Old-Style</div>
<div class="t" style="left:294.07px;top:1359.52px;font-size:20.53px;color:#9c9c9c;font-weight:bold;transform:scaleX(1.0751);">No Subscribers</div>
<div class="tg" style="top:1324.4px"><i></i></div>
</body>
</html>
